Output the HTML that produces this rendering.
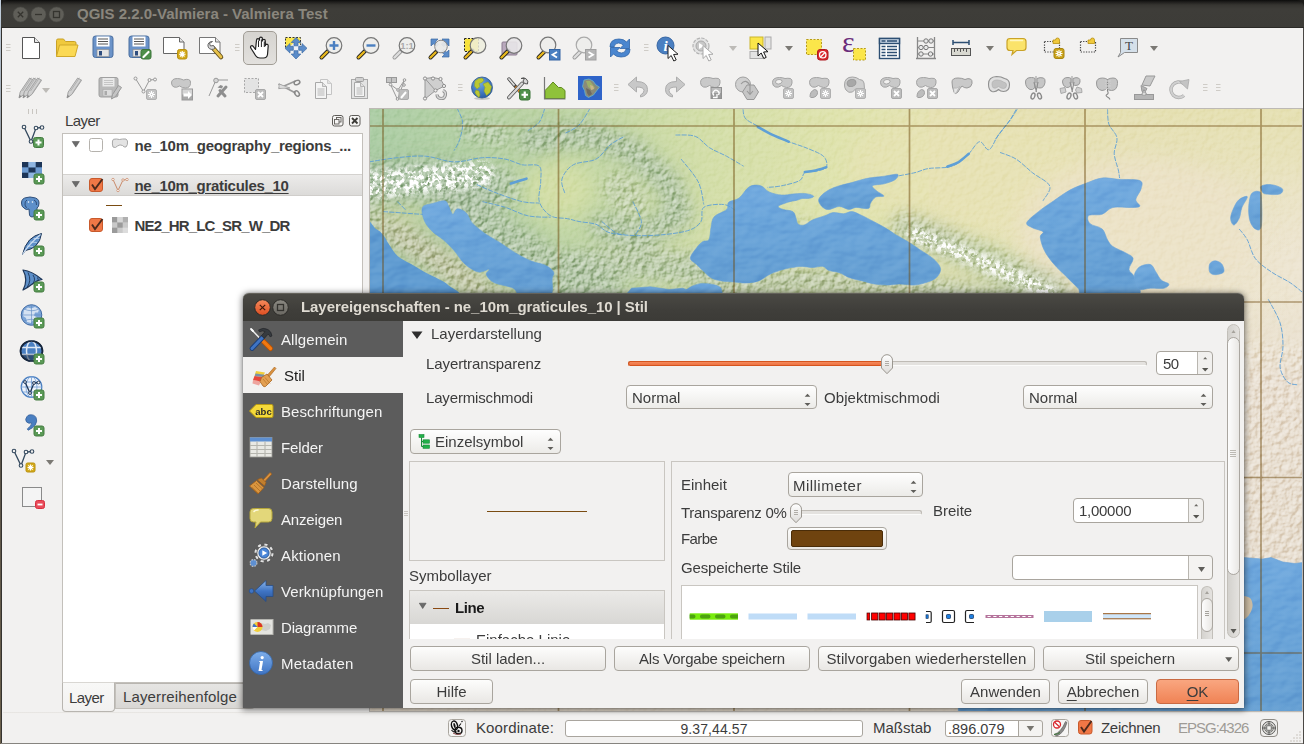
<!DOCTYPE html>
<html lang="de">
<head>
<meta charset="utf-8">
<title>QGIS 2.2.0-Valmiera - Valmiera Test</title>
<style>
*{box-sizing:border-box;margin:0;padding:0}
html,body{width:1304px;height:744px;overflow:hidden;background:#f2f1f0;font-family:"Liberation Sans",sans-serif;font-size:15px;color:#3c3c3c}
#root{position:absolute;left:0;top:0;width:1304px;height:744px;overflow:hidden;background:#f2f1f0}
.abs{position:absolute}
.t{position:absolute;white-space:nowrap;line-height:18px;height:18px}
.b{font-weight:700}
.titlebar{position:absolute;background:linear-gradient(#4a4944 0%,#3f3e3a 60%,#3c3b37 100%)}
.btn{position:absolute;height:24px;border:1px solid #a9a59e;border-radius:4px;background:linear-gradient(#fdfdfc,#e9e7e4);text-align:center;line-height:22px;white-space:nowrap;color:#3c3c3c}
.combo{position:absolute;height:24px;border:1px solid #a9a59e;border-radius:4px;background:linear-gradient(#fefefe,#ecebe8);line-height:24px;white-space:nowrap;color:#3c3c3c}
.field{position:absolute;border:1px solid #a9a59e;border-radius:4px;background:#fff;white-space:nowrap}
.ic{position:absolute;width:24px;height:24px;overflow:visible}
svg{display:block;overflow:visible}
</style>
</head>
<body>
<div id="root">
<!-- main window chrome -->
<div class="abs" style="left:0;top:0;width:2.400px;height:744px;background:#35332f"></div>
<div class="abs" style="left:0;top:0;width:1.300px;height:744px;z-index:3;background:linear-gradient(#c3d0de 0,#a3adb8 14%,#77746f 34%,#5c554a 60%,#6b604c 100%)"></div>
<div class="abs" style="left:0;top:0;width:1304px;height:8px;background:#1b1a18"></div>
<div class="abs" style="left:1px;top:0;width:1303px;height:28px;border-bottom:1px solid #2b2a27;border-radius:7px 7px 0 0;background:linear-gradient(#0c0c0b 0,#1f1e1c 2px,#363531 5px,#3e3d39 9px,#3d3c38 100%)"></div>
<!-- window buttons (inactive) -->
<svg class="abs" style="left:12px;top:6px" width="60" height="18" viewBox="0 0 60 18">
 <g fill="#5f5e58" stroke="#4a4944" stroke-width=".6"><circle cx="8.500" cy="8.500" r="7.500"/><circle cx="26.500" cy="8.500" r="7.500"/><circle cx="44.500" cy="8.500" r="7.500"/></g>
 <g stroke="#35342f" stroke-width="1.300" fill="none"><path d="M5.800 5.800l5.400 5.400M11.200 5.800l-5.400 5.400"/><path d="M23 8.500h7"/><rect x="41.500" y="5.500" width="6" height="6"/></g>
</svg>
<div class="t b" style="left:77px;top:5px;color:#8a867d">QGIS 2.2.0-Valmiera - Valmiera Test</div>

<!-- status bar -->
<div class="abs" style="left:3px;top:712px;width:1301px;height:2px;background:linear-gradient(#e2e0dc,#f7f6f5)"></div>
<div class="abs" style="left:0;top:743px;width:1304px;height:1px;background:#86847f"></div>
<div class="t" style="left:476px;top:719px;letter-spacing:.12px">Koordinate:</div>
<div class="field" style="left:565px;top:720px;width:298px;height:17px;border-radius:3px;text-align:center;line-height:17px;font-size:14px;overflow:hidden"><span style="position:relative;top:-.5px;letter-spacing:.1px">9.37,44.57</span></div>
<div class="t" style="left:873px;top:719px">Maßstab</div>
<div class="field" style="left:945px;top:720px;width:98px;height:17px;border-radius:3px;overflow:hidden;line-height:17px;background:linear-gradient(90deg,#fff 0,#fff 72px,#a9a59e 72px,#a9a59e 73px,#f4f3f1 73px)"><span style="position:relative;left:2px;top:-1.500px;font-size:14.500px">.896.079</span></div>
<svg class="abs" style="left:1025px;top:725px" width="12" height="8"><path d="M1.600 1h7.600l-3.800 5.200z" fill="#77756f"/></svg>
<div class="t" style="left:1101px;top:719px;letter-spacing:-.3px">Zeichnen</div>
<div class="t" style="left:1178px;top:719px;color:#9e9b96;letter-spacing:-.97px">EPSG:4326</div>
<!-- status bar icons -->
<svg class="abs" style="left:448px;top:719px" width="18" height="18" viewBox="0 0 18 18"><rect x=".5" y=".5" width="17" height="17" rx="3" fill="#f6f5f4" stroke="#a9a59e"/><ellipse cx="6.500" cy="6.500" rx="3" ry="4.500" fill="none" stroke="#111" stroke-width="1.400" transform="rotate(-15 6.500 6.500)"/><ellipse cx="6.500" cy="6.500" rx="1" ry="2.500" fill="#111" transform="rotate(-15 6.500 6.500)"/><ellipse cx="10.500" cy="11.500" rx="3.500" ry="3.200" fill="none" stroke="#111" stroke-width="1.400"/><circle cx="10.500" cy="12" r="1.200" fill="#111"/><path d="M3.500 11q2 3 5 1M11 7l2-2.500M13.500 3l1-1" stroke="#111" stroke-width="1.100" fill="none"/><path d="M5 14q3 2.500 8 1" stroke="#8b4a4a" stroke-width="1" fill="none"/></svg>
<svg class="abs" style="left:1051px;top:719px" width="18" height="18" viewBox="0 0 18 18"><rect x=".5" y=".5" width="17" height="17" rx="3" fill="#f6f5f4" stroke="#a9a59e"/><path d="M3 15.500q7-2 11.500-13l1.500 1q-3 10.500-10 13.500z" fill="#8a8a88" stroke="#555" stroke-width=".6"/><path d="M3 15.500q4-.5 6-2" stroke="#3e7a3a" stroke-width="1" fill="none"/><circle cx="6" cy="5.500" r="3.500" fill="#fff" stroke="#d9262c" stroke-width="1.300"/><path d="M3.600 3.300l4.800 4.400" stroke="#d9262c" stroke-width="1.300"/></svg>
<svg class="abs" style="left:1078px;top:719px" width="16" height="16" viewBox="0 0 16 16"><rect x=".5" y="1.500" width="13.500" height="13.500" rx="2.500" fill="#f07746" stroke="#c85a2c"/><path d="M3 8l3 4.500 7.500-10.500" fill="none" stroke="#4d2a1c" stroke-width="1.900"/></svg>
<svg class="abs" style="left:1260px;top:719px" width="18" height="18" viewBox="0 0 18 18"><rect x=".5" y=".5" width="17" height="17" rx="3.500" fill="#efeeec" stroke="#8e8b85"/><circle cx="9" cy="9" r="6.500" fill="#dddcd9" stroke="#5a5a58" stroke-width="1"/><circle cx="9" cy="9" r="4.300" fill="none" stroke="#6a6a68" stroke-width=".9"/><rect x="6.800" y="6.800" width="4.400" height="4.400" fill="#f4f4f2" stroke="#5a5a58" stroke-width=".8"/><path d="M9 2.500v4M9 11.500v4M2.500 9h4M11.500 9h4" stroke="#5a5a58" stroke-width="1"/></svg>
<svg class="abs" style="left:1289px;top:729px" width="14" height="14" viewBox="0 0 14 14"><g fill="#dedbd7"><rect x="10" y="2" width="2" height="2"/><rect x="7" y="5" width="2" height="2"/><rect x="10" y="5" width="2" height="2"/><rect x="4" y="8" width="2" height="2"/><rect x="7" y="8" width="2" height="2"/><rect x="10" y="8" width="2" height="2"/><rect x="1" y="11" width="2" height="2"/><rect x="4" y="11" width="2" height="2"/><rect x="7" y="11" width="2" height="2"/><rect x="10" y="11" width="2" height="2"/></g></svg>
<!-- map canvas -->
<svg class="abs" style="left:369px;top:108px;overflow:hidden" width="934" height="604" viewBox="0 0 934 604">
<defs>
<linearGradient id="land" x1="0" x2="1" y1="0" y2="0">
<stop offset="0" stop-color="#accda5"/><stop offset="0.1" stop-color="#b4d0a5"/><stop offset="0.2" stop-color="#bfd5a5"/><stop offset="0.36" stop-color="#d3dea9"/><stop offset="0.5" stop-color="#dfe3ae"/><stop offset="0.66" stop-color="#e6e3b5"/><stop offset="0.8" stop-color="#ebe3c4"/><stop offset="1" stop-color="#ede5d2"/>
</linearGradient>
<linearGradient id="south" x1="0" x2="0" y1="0" y2="1">
<stop offset="0" stop-color="#e8dfce" stop-opacity="0"/><stop offset="0.3" stop-color="#e8dfce" stop-opacity="0"/><stop offset="0.45" stop-color="#e8ded0" stop-opacity="1"/><stop offset="1" stop-color="#e4dacb" stop-opacity="1"/>
</linearGradient>
<linearGradient id="neast" x1="0" x2="0" y1="0" y2="1"><stop offset="0" stop-color="#e5e0b2" stop-opacity="1"/><stop offset="0.35" stop-color="#e6e1b6" stop-opacity=".8"/><stop offset="1" stop-color="#e9e2c0" stop-opacity="0"/></linearGradient>
<linearGradient id="sea" x1="0" x2="0" y1="0" y2="1"><stop offset="0" stop-color="#72aadf"/><stop offset="0.35" stop-color="#6ba5da"/><stop offset="1" stop-color="#649ed2"/></linearGradient>
<filter id="blur6" x="-20%" y="-20%" width="140%" height="140%"><feGaussianBlur stdDeviation="6"/></filter>
<filter id="blur10" x="-30%" y="-30%" width="160%" height="160%"><feGaussianBlur stdDeviation="10"/></filter>
<filter id="blur3" x="-20%" y="-20%" width="140%" height="140%"><feGaussianBlur stdDeviation="3"/></filter>
<filter id="relief" x="0" y="0" width="100%" height="100%" color-interpolation-filters="sRGB">
<feTurbulence type="fractalNoise" baseFrequency="0.17" numOctaves="4" seed="11" result="n"/>
<feDiffuseLighting in="n" surfaceScale="2.600" diffuseConstant="1" lighting-color="#fff"><feDistantLight azimuth="225" elevation="35"/></feDiffuseLighting>
</filter>
<filter id="relief2" x="0" y="0" width="100%" height="100%" color-interpolation-filters="sRGB">
<feTurbulence type="fractalNoise" baseFrequency="0.035 0.06" numOctaves="3" seed="5" result="n"/>
<feDiffuseLighting in="n" surfaceScale="5" diffuseConstant="1" lighting-color="#fff"><feDistantLight azimuth="225" elevation="32"/></feDiffuseLighting>
</filter>
<filter id="snow" x="0" y="0" width="100%" height="100%" color-interpolation-filters="sRGB">
<feTurbulence type="fractalNoise" baseFrequency="0.22" numOctaves="3" seed="3" result="n"/>
<feColorMatrix in="n" type="matrix" values="0 0 0 0 1  0 0 0 0 1  0 0 0 0 1  6 0 0 0 -2.700"/>
</filter>
<mask id="mtn" maskUnits="userSpaceOnUse" x="0" y="0" width="935" height="604">
<rect width="935" height="604" fill="#2c2c2c"/>
<g filter="url(#blur6)" fill="none" stroke="#fff" stroke-linecap="round" stroke-linejoin="round">
<path d="M-10 78L60 72 130 80" stroke-width="42"/>
<path d="M0 110L50 140 100 175 140 200" stroke-width="26"/>
<path d="M85 95L130 130 190 168 240 195" stroke-width="42"/>
<path d="M160 32L215 26 262 42 300 76 312 108 272 128 232 118" stroke-width="24"/>
<path d="M250 80L262 95" stroke-width="34"/>
<path d="M205 158L270 154 335 162" stroke-width="34"/>
<path d="M100 20L130 28" stroke-width="22"/>
<path d="M536 118L590 140 640 162 690 186" stroke-width="30"/>
<path d="M350 182L430 172 530 178 640 195" stroke-width="26"/>
<path d="M420 116L440 114" stroke-width="8"/>
</g>
<rect x="874" y="235" width="80" height="225" fill="#e0e0e0" filter="url(#blur6)"/>
</mask>
<mask id="mtn2" maskUnits="userSpaceOnUse" x="0" y="0" width="935" height="604">

<g filter="url(#blur6)" fill="none" stroke="#fff" stroke-linecap="round" stroke-linejoin="round">
<path d="M-10 78L60 72 130 80" stroke-width="42"/>
<path d="M0 110L50 140 100 175 140 200" stroke-width="26"/>
<path d="M85 95L130 130 190 168 240 195" stroke-width="42"/>
<path d="M160 32L215 26 262 42 300 76 312 108 272 128 232 118" stroke-width="24"/>
<path d="M250 80L262 95" stroke-width="34"/>
<path d="M205 158L270 154 335 162" stroke-width="34"/>
<path d="M100 20L130 28" stroke-width="22"/>
<path d="M536 118L590 140 640 162 690 186" stroke-width="30"/>
<path d="M350 182L430 172 530 178 640 195" stroke-width="26"/>
<path d="M420 116L440 114" stroke-width="8"/>
</g>

</mask>
<mask id="snowA" maskUnits="userSpaceOnUse" x="0" y="0" width="935" height="604">
<g filter="url(#blur3)" fill="none" stroke="#fff" stroke-linecap="round" stroke-linejoin="round">
<path d="M-10 78L30 74 70 70 112 66" stroke-width="27"/>
<path d="M545 126L590 144 640 166 680 184" stroke-width="15"/>
</g>
</mask>
</defs>

<rect width="934" height="604" fill="url(#land)"/>
<rect width="934" height="604" fill="url(#south)"/>
<rect x="560" width="374" height="150" fill="url(#neast)"/>
<g filter="url(#blur10)">
<ellipse cx="50" cy="78" rx="90" ry="26" fill="#a3bf9b" opacity=".8"/>
<path d="M85 95L130 130 190 168 240 195" stroke="#a9c39d" stroke-width="44" fill="none" opacity=".75" stroke-linecap="round"/>
<path d="M0 108L50 140 100 175 140 200" stroke="#bdc298" stroke-width="30" fill="none" opacity=".7" stroke-linecap="round"/>
<path d="M160 32L215 26 262 42 300 76 312 108 272 128 232 118" stroke="#a8c29d" stroke-width="24" fill="none" opacity=".8" stroke-linecap="round" stroke-linejoin="round"/>
<ellipse cx="190" cy="82" rx="34" ry="30" fill="#d4dea6" opacity=".95"/>
<ellipse cx="275" cy="150" rx="50" ry="12" fill="#d6dfa8" opacity=".9"/>
<ellipse cx="30" cy="105" rx="45" ry="9" fill="#c9d7a3" opacity=".9"/>
<path d="M205 160L270 156 335 164" stroke="#adc59f" stroke-width="30" fill="none" opacity=".7" stroke-linecap="round"/>
<path d="M536 120L590 142 640 164 690 188" stroke="#b0c499" stroke-width="26" fill="none" opacity=".85" stroke-linecap="round"/>
<path d="M350 184L430 174 530 180 640 196" stroke="#b8c69f" stroke-width="26" fill="none" opacity=".9" stroke-linecap="round"/>
<ellipse cx="600" cy="60" rx="120" ry="60" fill="#e7e2b4" opacity=".6"/>
<ellipse cx="770" cy="120" rx="120" ry="70" fill="#ece2c8" opacity=".8"/>
<path d="M20 122L70 150 110 180" stroke="#cdc9a0" stroke-width="16" fill="none" opacity=".9" stroke-linecap="round"/>
<ellipse cx="620" cy="150" rx="40" ry="12" fill="#c5d6a2" opacity=".8" transform="rotate(22 620 150)"/>
</g>

<rect width="934" height="604" fill="#b2bdae" mask="url(#mtn2)" opacity=".3"/>
<rect width="934" height="604" filter="url(#relief)" mask="url(#mtn)" style="mix-blend-mode:soft-light" opacity="1"/>
<rect width="934" height="200" filter="url(#snow)" mask="url(#snowA)"/>
<path d="M-3.6 117.0C-1.8 105.8 4.2 119.5 7.1 121.0C10.0 122.6 11.6 123.7 13.8 126.4C16.1 129.1 18.1 133.6 20.6 137.2C23.0 140.7 25.1 144.8 28.6 147.9C32.2 151.1 37.6 153.3 42.1 156.0C46.6 158.7 51.0 161.6 55.5 164.0C60.0 166.5 64.9 168.5 69.0 170.8C73.0 173.0 77.0 174.6 79.7 177.5C82.4 180.4 99.0 186.4 85.1 188.2C71.2 190.0 11.2 200.1 -3.6 188.2C-18.4 176.4 -5.4 128.2 -3.6 117.0Z" fill="#5f9bd1"/>
<g fill="url(#sea)" stroke="#6aa3d8" stroke-width=".6">
<path d="M53.4 99.5C54.7 96.6 59.9 96.6 63.6 95.5C67.3 94.4 73.0 92.4 75.7 92.8C78.4 93.3 78.4 95.9 79.7 98.2C81.1 100.4 82.3 105.8 83.7 106.2C85.2 106.7 86.1 101.1 88.3 100.9C90.6 100.6 94.6 102.4 97.2 104.9C99.8 107.4 100.5 112.1 103.9 115.7C107.3 119.2 112.9 123.3 117.3 126.4C121.8 129.5 125.9 131.3 130.8 134.5C135.7 137.6 141.5 142.1 146.9 145.2C152.3 148.4 158.1 151.3 163.0 153.3C168.0 155.3 172.9 155.5 176.5 157.3C180.1 159.1 183.4 161.8 184.5 164.0C185.7 166.3 183.9 166.7 183.2 170.8C182.5 174.8 185.7 185.3 180.5 188.2C175.4 191.1 158.3 189.6 152.3 188.2C146.2 186.9 148.7 182.4 144.2 180.2C139.7 177.9 129.9 177.0 125.4 174.8C120.9 172.6 118.2 169.0 117.3 166.7C116.4 164.5 121.4 161.8 120.0 161.4C118.7 160.9 113.3 164.9 109.3 164.0C105.2 163.1 99.9 159.6 95.8 156.0C91.8 152.4 88.7 146.6 85.1 142.5C81.5 138.5 77.9 134.9 74.3 131.8C70.7 128.6 66.7 126.9 63.6 123.7C60.4 120.6 57.2 117.0 55.5 113.0C53.8 108.9 52.0 102.4 53.4 99.5Z"/>
<path d="M321.4 150.2C321.4 147.4 325.5 142.6 327.6 139.8C329.6 137.1 331.7 135.0 333.8 133.6C335.8 132.2 338.6 133.9 340.0 131.5C341.4 129.1 341.2 122.9 342.1 119.1C342.9 115.3 342.6 111.7 345.2 108.8C347.7 105.8 355.2 103.9 357.6 101.5C360.0 99.1 357.6 96.2 359.7 94.3C361.7 92.4 366.6 92.7 370.0 90.1C373.5 87.5 376.7 80.8 380.4 78.7C384.0 76.7 388.5 76.8 391.7 77.7C395.0 78.6 396.6 82.4 400.0 83.9C403.5 85.5 408.5 86.7 412.4 87.0C416.4 87.4 420.4 86.3 423.8 86.0C427.3 85.7 430.3 85.3 433.2 85.4C436.0 85.4 439.1 85.9 441.0 86.4C443.0 86.9 444.9 87.8 444.7 88.5C444.6 89.1 442.3 90.0 440.4 90.3C438.5 90.7 435.2 90.2 433.2 90.5C431.1 90.9 430.4 91.6 428.0 92.2C425.6 92.8 421.8 93.2 418.7 94.3C415.6 95.3 410.0 97.2 409.3 98.4C408.7 99.6 412.1 100.7 414.5 101.5C416.9 102.4 421.8 102.2 423.8 103.6C425.9 105.0 426.1 107.7 426.9 109.8C427.8 111.9 427.6 114.8 429.0 116.0C430.4 117.2 432.8 117.7 435.2 117.0C437.6 116.4 440.1 113.4 443.5 111.9C447.0 110.3 452.5 108.9 455.9 107.7C459.4 106.5 461.1 105.0 464.2 104.6C467.3 104.3 471.5 105.8 474.6 105.7C477.7 105.5 480.1 103.4 482.8 103.6C485.6 103.8 488.0 105.3 491.1 106.7C494.2 108.1 497.5 109.8 501.5 111.9C505.4 113.9 510.8 116.7 514.9 119.1C519.1 121.5 522.4 123.9 526.3 126.4C530.3 128.8 534.6 131.0 538.7 133.6C542.9 136.2 547.0 139.1 551.2 141.9C555.3 144.6 560.3 147.4 563.6 150.2C566.9 152.9 569.6 156.0 570.8 158.4C572.0 160.9 571.7 162.6 570.8 164.7C570.0 166.7 568.2 169.1 565.7 170.9C563.1 172.6 558.8 174.0 555.3 175.0C551.9 176.0 549.1 176.9 545.0 177.1C540.8 177.3 534.9 176.0 530.5 176.0C526.0 176.0 522.2 177.1 518.0 177.1C513.9 177.1 509.8 176.7 505.6 176.0C501.5 175.4 497.3 174.0 493.2 172.9C489.1 171.9 484.6 171.2 480.8 169.8C477.0 168.5 473.9 165.9 470.4 164.7C467.0 163.5 462.8 163.6 460.1 162.6C457.3 161.6 456.6 159.0 453.9 158.4C451.1 157.9 447.0 159.5 443.5 159.5C440.1 159.5 436.6 158.4 433.2 158.4C429.7 158.4 426.6 158.8 422.8 159.5C419.0 160.2 414.2 161.4 410.4 162.6C406.6 163.8 403.5 165.0 400.0 166.7C396.6 168.5 393.5 171.6 389.7 172.9C385.9 174.3 381.4 174.8 377.3 175.0C373.1 175.2 369.0 174.3 364.8 174.0C360.7 173.6 356.2 173.6 352.4 172.9C348.6 172.3 345.2 171.6 342.1 169.8C339.0 168.1 336.2 164.8 333.8 162.6C331.4 160.3 329.6 158.4 327.6 156.4C325.5 154.3 321.4 152.9 321.4 150.2Z"/>
<path d="M311.0 189.5C305.5 188.5 313.1 185.6 315.1 183.7C317.2 181.8 320.3 179.5 323.4 178.1C326.5 176.7 330.0 175.6 333.8 175.4C337.6 175.3 343.1 176.1 346.2 177.1C349.3 178.0 352.1 179.2 352.4 181.2C352.8 183.3 355.2 188.1 348.3 189.5C341.4 190.9 316.5 190.5 311.0 189.5Z"/>
<path d="M453.9 99.4C452.1 98.1 450.1 95.1 449.7 93.2C449.4 91.3 450.1 90.0 451.8 88.1C453.5 86.2 457.0 83.6 460.1 81.8C463.2 80.1 466.6 78.9 470.4 77.7C474.2 76.5 478.4 75.8 482.8 74.6C487.3 73.4 492.2 71.5 497.3 70.5C502.5 69.4 508.7 69.1 513.9 68.4C519.1 67.7 526.3 65.8 528.4 66.3C530.5 66.8 528.4 69.9 526.3 71.5C524.3 73.0 519.8 74.6 516.0 75.6C512.2 76.7 504.9 76.5 503.5 77.7C502.2 78.9 505.8 81.2 507.7 82.9C509.6 84.6 515.1 87.0 514.9 88.1C514.8 89.1 508.9 87.9 506.7 89.1C504.4 90.3 502.7 93.4 501.5 95.3C500.3 97.2 501.8 99.8 499.4 100.5C497.0 101.2 490.3 99.3 487.0 99.4C483.7 99.6 482.5 101.7 479.7 101.5C477.0 101.3 473.7 98.4 470.4 98.4C467.1 98.4 462.8 101.3 460.1 101.5C457.3 101.7 455.6 100.8 453.9 99.4Z"/>
<path d="M657.9 114.3C659.2 111.4 666.8 105.8 671.3 102.2C675.8 98.6 679.8 96.2 684.8 92.8C689.7 89.4 695.5 85.0 700.9 82.1C706.3 79.1 711.6 77.3 717.0 75.3C722.4 73.3 727.8 70.6 733.2 70.0C738.5 69.3 743.0 70.9 749.3 71.3C755.6 71.7 767.0 71.1 770.8 72.6C774.6 74.2 772.8 77.6 772.1 80.7C771.5 83.8 767.0 88.6 766.8 91.5C766.5 94.4 771.5 96.8 770.8 98.2C770.1 99.5 767.2 99.3 762.7 99.5C758.2 99.8 748.8 98.4 743.9 99.5C739.0 100.6 737.2 104.9 733.2 106.2C729.1 107.6 721.7 106.0 719.7 107.6C717.7 109.2 718.8 113.4 721.1 115.7C723.3 117.9 730.2 118.3 733.2 121.0C736.1 123.7 736.7 128.9 738.5 131.8C740.3 134.7 740.8 136.3 743.9 138.5C747.0 140.7 754.0 143.2 757.3 145.2C760.7 147.2 763.6 147.9 764.1 150.6C764.5 153.3 759.8 158.2 760.0 161.4C760.3 164.5 764.1 164.9 765.4 169.4C766.8 173.9 776.2 185.1 768.1 188.2C760.0 191.4 726.9 189.6 717.0 188.2C707.2 186.9 712.1 183.3 709.0 180.2C705.8 177.0 702.2 173.5 698.2 169.4C694.2 165.4 688.6 160.5 684.8 156.0C681.0 151.5 677.6 147.0 675.4 142.5C673.1 138.1 671.5 132.2 671.3 129.1C671.1 126.0 675.4 125.3 674.0 123.7C672.7 122.2 665.9 121.3 663.3 119.7C660.6 118.1 656.5 117.2 657.9 114.3Z"/>
<path d="M765.4 166.7C766.1 164.0 768.1 160.4 770.8 158.7C773.5 157.0 778.8 155.6 781.5 156.5C784.2 157.4 785.1 161.4 786.9 164.0C788.7 166.6 790.1 170.1 792.3 172.1C794.4 174.1 799.4 174.8 799.8 176.1C800.3 177.5 798.0 179.5 795.0 180.2C791.9 180.8 785.6 179.9 781.5 180.2C777.5 180.4 773.2 182.4 770.8 181.5C768.3 180.6 767.6 177.3 766.8 174.8C765.9 172.3 764.7 169.4 765.4 166.7Z"/>
<path d="M861.6 110.3C861.6 107.4 863.4 102.7 864.9 99.5C866.3 96.4 868.0 93.3 870.2 91.5C872.5 89.7 877.9 87.4 878.3 88.8C878.8 90.1 874.3 95.9 872.9 99.5C871.6 103.1 871.6 107.4 870.2 110.3C868.9 113.2 866.3 117.0 864.9 117.0C863.4 117.0 861.6 113.2 861.6 110.3Z"/>
<path d="M882.3 86.1C883.9 83.4 887.4 82.9 889.1 83.4C890.7 83.8 891.8 82.9 892.3 88.8C892.8 94.6 893.3 113.0 892.3 118.3C891.3 123.7 888.3 121.9 886.4 121.0C884.5 120.1 882.1 116.6 881.0 113.0C879.9 109.4 879.4 104.0 879.7 99.5C879.9 95.0 880.8 88.8 882.3 86.1Z"/>
<path d="M892.3 78.0C893.9 76.9 899.0 76.2 902.5 76.7C906.0 77.1 911.9 79.1 913.3 80.7C914.6 82.3 913.3 85.2 910.6 86.1C907.9 87.0 900.0 86.5 897.1 86.1C894.2 85.6 893.9 84.7 893.1 83.4C892.3 82.1 890.7 79.1 892.3 78.0Z"/>
<path d="M840.7 156.0C841.6 154.1 844.0 152.8 846.1 152.8C848.1 152.8 851.3 154.1 852.8 156.0C854.2 157.9 855.8 162.3 854.7 164.0C853.5 165.8 848.4 166.7 846.1 166.7C843.7 166.7 841.6 165.8 840.7 164.0C839.8 162.3 839.8 157.9 840.7 156.0Z"/>
<path d="M255.8 188.2 L262.5 180.2 L281.3 178.8 L300.1 181.5 L313.6 180.2 L323.0 183.4 L323.0 188.2Z"/>
<path d="M589.3 436.3 L707.4 442.2 L796.0 448.1 L874.8 449.6 L893.4 451.0 L902.2 449.6 L914.0 454.0 L925.8 455.5 L937.7 454.0 L937.7 607.5 L589.3 607.5Z"/>
</g>
<clipPath id="seaclip">
<path d="M-3.6 117.0C-1.8 105.8 4.2 119.5 7.1 121.0C10.0 122.6 11.6 123.7 13.8 126.4C16.1 129.1 18.1 133.6 20.6 137.2C23.0 140.7 25.1 144.8 28.6 147.9C32.2 151.1 37.6 153.3 42.1 156.0C46.6 158.7 51.0 161.6 55.5 164.0C60.0 166.5 64.9 168.5 69.0 170.8C73.0 173.0 77.0 174.6 79.7 177.5C82.4 180.4 99.0 186.4 85.1 188.2C71.2 190.0 11.2 200.1 -3.6 188.2C-18.4 176.4 -5.4 128.2 -3.6 117.0Z"/>
<path d="M53.4 99.5C54.7 96.6 59.9 96.6 63.6 95.5C67.3 94.4 73.0 92.4 75.7 92.8C78.4 93.3 78.4 95.9 79.7 98.2C81.1 100.4 82.3 105.8 83.7 106.2C85.2 106.7 86.1 101.1 88.3 100.9C90.6 100.6 94.6 102.4 97.2 104.9C99.8 107.4 100.5 112.1 103.9 115.7C107.3 119.2 112.9 123.3 117.3 126.4C121.8 129.5 125.9 131.3 130.8 134.5C135.7 137.6 141.5 142.1 146.9 145.2C152.3 148.4 158.1 151.3 163.0 153.3C168.0 155.3 172.9 155.5 176.5 157.3C180.1 159.1 183.4 161.8 184.5 164.0C185.7 166.3 183.9 166.7 183.2 170.8C182.5 174.8 185.7 185.3 180.5 188.2C175.4 191.1 158.3 189.6 152.3 188.2C146.2 186.9 148.7 182.4 144.2 180.2C139.7 177.9 129.9 177.0 125.4 174.8C120.9 172.6 118.2 169.0 117.3 166.7C116.4 164.5 121.4 161.8 120.0 161.4C118.7 160.9 113.3 164.9 109.3 164.0C105.2 163.1 99.9 159.6 95.8 156.0C91.8 152.4 88.7 146.6 85.1 142.5C81.5 138.5 77.9 134.9 74.3 131.8C70.7 128.6 66.7 126.9 63.6 123.7C60.4 120.6 57.2 117.0 55.5 113.0C53.8 108.9 52.0 102.4 53.4 99.5Z"/>
<path d="M321.4 150.2C321.4 147.4 325.5 142.6 327.6 139.8C329.6 137.1 331.7 135.0 333.8 133.6C335.8 132.2 338.6 133.9 340.0 131.5C341.4 129.1 341.2 122.9 342.1 119.1C342.9 115.3 342.6 111.7 345.2 108.8C347.7 105.8 355.2 103.9 357.6 101.5C360.0 99.1 357.6 96.2 359.7 94.3C361.7 92.4 366.6 92.7 370.0 90.1C373.5 87.5 376.7 80.8 380.4 78.7C384.0 76.7 388.5 76.8 391.7 77.7C395.0 78.6 396.6 82.4 400.0 83.9C403.5 85.5 408.5 86.7 412.4 87.0C416.4 87.4 420.4 86.3 423.8 86.0C427.3 85.7 430.3 85.3 433.2 85.4C436.0 85.4 439.1 85.9 441.0 86.4C443.0 86.9 444.9 87.8 444.7 88.5C444.6 89.1 442.3 90.0 440.4 90.3C438.5 90.7 435.2 90.2 433.2 90.5C431.1 90.9 430.4 91.6 428.0 92.2C425.6 92.8 421.8 93.2 418.7 94.3C415.6 95.3 410.0 97.2 409.3 98.4C408.7 99.6 412.1 100.7 414.5 101.5C416.9 102.4 421.8 102.2 423.8 103.6C425.9 105.0 426.1 107.7 426.9 109.8C427.8 111.9 427.6 114.8 429.0 116.0C430.4 117.2 432.8 117.7 435.2 117.0C437.6 116.4 440.1 113.4 443.5 111.9C447.0 110.3 452.5 108.9 455.9 107.7C459.4 106.5 461.1 105.0 464.2 104.6C467.3 104.3 471.5 105.8 474.6 105.7C477.7 105.5 480.1 103.4 482.8 103.6C485.6 103.8 488.0 105.3 491.1 106.7C494.2 108.1 497.5 109.8 501.5 111.9C505.4 113.9 510.8 116.7 514.9 119.1C519.1 121.5 522.4 123.9 526.3 126.4C530.3 128.8 534.6 131.0 538.7 133.6C542.9 136.2 547.0 139.1 551.2 141.9C555.3 144.6 560.3 147.4 563.6 150.2C566.9 152.9 569.6 156.0 570.8 158.4C572.0 160.9 571.7 162.6 570.8 164.7C570.0 166.7 568.2 169.1 565.7 170.9C563.1 172.6 558.8 174.0 555.3 175.0C551.9 176.0 549.1 176.9 545.0 177.1C540.8 177.3 534.9 176.0 530.5 176.0C526.0 176.0 522.2 177.1 518.0 177.1C513.9 177.1 509.8 176.7 505.6 176.0C501.5 175.4 497.3 174.0 493.2 172.9C489.1 171.9 484.6 171.2 480.8 169.8C477.0 168.5 473.9 165.9 470.4 164.7C467.0 163.5 462.8 163.6 460.1 162.6C457.3 161.6 456.6 159.0 453.9 158.4C451.1 157.9 447.0 159.5 443.5 159.5C440.1 159.5 436.6 158.4 433.2 158.4C429.7 158.4 426.6 158.8 422.8 159.5C419.0 160.2 414.2 161.4 410.4 162.6C406.6 163.8 403.5 165.0 400.0 166.7C396.6 168.5 393.5 171.6 389.7 172.9C385.9 174.3 381.4 174.8 377.3 175.0C373.1 175.2 369.0 174.3 364.8 174.0C360.7 173.6 356.2 173.6 352.4 172.9C348.6 172.3 345.2 171.6 342.1 169.8C339.0 168.1 336.2 164.8 333.8 162.6C331.4 160.3 329.6 158.4 327.6 156.4C325.5 154.3 321.4 152.9 321.4 150.2Z"/>
<path d="M311.0 189.5C305.5 188.5 313.1 185.6 315.1 183.7C317.2 181.8 320.3 179.5 323.4 178.1C326.5 176.7 330.0 175.6 333.8 175.4C337.6 175.3 343.1 176.1 346.2 177.1C349.3 178.0 352.1 179.2 352.4 181.2C352.8 183.3 355.2 188.1 348.3 189.5C341.4 190.9 316.5 190.5 311.0 189.5Z"/>
<path d="M453.9 99.4C452.1 98.1 450.1 95.1 449.7 93.2C449.4 91.3 450.1 90.0 451.8 88.1C453.5 86.2 457.0 83.6 460.1 81.8C463.2 80.1 466.6 78.9 470.4 77.7C474.2 76.5 478.4 75.8 482.8 74.6C487.3 73.4 492.2 71.5 497.3 70.5C502.5 69.4 508.7 69.1 513.9 68.4C519.1 67.7 526.3 65.8 528.4 66.3C530.5 66.8 528.4 69.9 526.3 71.5C524.3 73.0 519.8 74.6 516.0 75.6C512.2 76.7 504.9 76.5 503.5 77.7C502.2 78.9 505.8 81.2 507.7 82.9C509.6 84.6 515.1 87.0 514.9 88.1C514.8 89.1 508.9 87.9 506.7 89.1C504.4 90.3 502.7 93.4 501.5 95.3C500.3 97.2 501.8 99.8 499.4 100.5C497.0 101.2 490.3 99.3 487.0 99.4C483.7 99.6 482.5 101.7 479.7 101.5C477.0 101.3 473.7 98.4 470.4 98.4C467.1 98.4 462.8 101.3 460.1 101.5C457.3 101.7 455.6 100.8 453.9 99.4Z"/>
<path d="M657.9 114.3C659.2 111.4 666.8 105.8 671.3 102.2C675.8 98.6 679.8 96.2 684.8 92.8C689.7 89.4 695.5 85.0 700.9 82.1C706.3 79.1 711.6 77.3 717.0 75.3C722.4 73.3 727.8 70.6 733.2 70.0C738.5 69.3 743.0 70.9 749.3 71.3C755.6 71.7 767.0 71.1 770.8 72.6C774.6 74.2 772.8 77.6 772.1 80.7C771.5 83.8 767.0 88.6 766.8 91.5C766.5 94.4 771.5 96.8 770.8 98.2C770.1 99.5 767.2 99.3 762.7 99.5C758.2 99.8 748.8 98.4 743.9 99.5C739.0 100.6 737.2 104.9 733.2 106.2C729.1 107.6 721.7 106.0 719.7 107.6C717.7 109.2 718.8 113.4 721.1 115.7C723.3 117.9 730.2 118.3 733.2 121.0C736.1 123.7 736.7 128.9 738.5 131.8C740.3 134.7 740.8 136.3 743.9 138.5C747.0 140.7 754.0 143.2 757.3 145.2C760.7 147.2 763.6 147.9 764.1 150.6C764.5 153.3 759.8 158.2 760.0 161.4C760.3 164.5 764.1 164.9 765.4 169.4C766.8 173.9 776.2 185.1 768.1 188.2C760.0 191.4 726.9 189.6 717.0 188.2C707.2 186.9 712.1 183.3 709.0 180.2C705.8 177.0 702.2 173.5 698.2 169.4C694.2 165.4 688.6 160.5 684.8 156.0C681.0 151.5 677.6 147.0 675.4 142.5C673.1 138.1 671.5 132.2 671.3 129.1C671.1 126.0 675.4 125.3 674.0 123.7C672.7 122.2 665.9 121.3 663.3 119.7C660.6 118.1 656.5 117.2 657.9 114.3Z"/>
<path d="M765.4 166.7C766.1 164.0 768.1 160.4 770.8 158.7C773.5 157.0 778.8 155.6 781.5 156.5C784.2 157.4 785.1 161.4 786.9 164.0C788.7 166.6 790.1 170.1 792.3 172.1C794.4 174.1 799.4 174.8 799.8 176.1C800.3 177.5 798.0 179.5 795.0 180.2C791.9 180.8 785.6 179.9 781.5 180.2C777.5 180.4 773.2 182.4 770.8 181.5C768.3 180.6 767.6 177.3 766.8 174.8C765.9 172.3 764.7 169.4 765.4 166.7Z"/>
<path d="M861.6 110.3C861.6 107.4 863.4 102.7 864.9 99.5C866.3 96.4 868.0 93.3 870.2 91.5C872.5 89.7 877.9 87.4 878.3 88.8C878.8 90.1 874.3 95.9 872.9 99.5C871.6 103.1 871.6 107.4 870.2 110.3C868.9 113.2 866.3 117.0 864.9 117.0C863.4 117.0 861.6 113.2 861.6 110.3Z"/>
<path d="M882.3 86.1C883.9 83.4 887.4 82.9 889.1 83.4C890.7 83.8 891.8 82.9 892.3 88.8C892.8 94.6 893.3 113.0 892.3 118.3C891.3 123.7 888.3 121.9 886.4 121.0C884.5 120.1 882.1 116.6 881.0 113.0C879.9 109.4 879.4 104.0 879.7 99.5C879.9 95.0 880.8 88.8 882.3 86.1Z"/>
<path d="M892.3 78.0C893.9 76.9 899.0 76.2 902.5 76.7C906.0 77.1 911.9 79.1 913.3 80.7C914.6 82.3 913.3 85.2 910.6 86.1C907.9 87.0 900.0 86.5 897.1 86.1C894.2 85.6 893.9 84.7 893.1 83.4C892.3 82.1 890.7 79.1 892.3 78.0Z"/>
<path d="M840.7 156.0C841.6 154.1 844.0 152.8 846.1 152.8C848.1 152.8 851.3 154.1 852.8 156.0C854.2 157.9 855.8 162.3 854.7 164.0C853.5 165.8 848.4 166.7 846.1 166.7C843.7 166.7 841.6 165.8 840.7 164.0C839.8 162.3 839.8 157.9 840.7 156.0Z"/>
<path d="M255.8 188.2 L262.5 180.2 L281.3 178.8 L300.1 181.5 L313.6 180.2 L323.0 183.4 L323.0 188.2Z"/>
<path d="M589.3 436.3 L707.4 442.2 L796.0 448.1 L874.8 449.6 L893.4 451.0 L902.2 449.6 L914.0 454.0 L925.8 455.5 L937.7 454.0 L937.7 607.5 L589.3 607.5Z"/>
</clipPath>
<rect width="934" height="604" filter="url(#relief2)" clip-path="url(#seaclip)" style="mix-blend-mode:soft-light" opacity=".18"/>
<path d="M866.8 486.5C868.1 482.3 872.4 487.4 874.8 487.9C877.1 488.5 879.5 488.5 881.0 490.0C882.5 491.5 883.5 494.4 883.6 496.8C883.7 499.2 882.7 502.0 881.6 504.2C880.5 506.4 878.9 508.6 877.1 510.1C875.4 511.6 873.0 512.5 871.2 513.0C869.5 513.5 867.5 517.5 866.8 513.0C866.1 508.6 865.5 490.6 866.8 486.5Z" fill="#cbbca3"/>
<g fill="none" stroke="#5e9fd6" stroke-width="0.9" stroke-linejoin="round" stroke-dasharray="5 1.200">
<path d="M374.0 1.4C374.5 3.0 374.0 7.9 376.7 10.8C379.4 13.7 386.1 16.4 390.1 18.9C394.2 21.3 396.0 23.1 400.9 25.6C405.8 28.1 413.4 31.2 419.7 33.7C426.0 36.1 432.7 37.9 438.5 40.4C444.4 42.9 451.5 45.3 454.7 48.5C457.8 51.6 458.7 56.7 457.3 59.2C456.0 61.7 450.2 62.3 446.6 63.2C443.0 64.1 438.5 63.0 435.8 64.6C433.2 66.1 434.5 70.4 430.5 72.6C426.4 74.9 417.0 76.9 411.6 78.0C406.3 79.1 400.4 79.1 398.2 79.4"/>
<path d="M648.2 1.4C646.9 3.4 643.3 9.2 640.1 13.5C637.0 17.8 632.7 22.2 629.4 26.9C626.0 31.7 623.1 40.6 620.0 41.7C616.8 42.9 613.9 33.0 610.6 33.7C607.2 34.3 603.4 42.2 599.8 45.8C596.2 49.3 592.6 52.9 589.1 55.2C585.5 57.4 583.2 58.3 578.3 59.2C573.4 60.1 564.9 59.7 559.5 60.5C554.1 61.4 551.0 63.4 546.1 64.6C541.1 65.8 532.6 67.3 529.9 67.8"/>
<path d="M738.5 1.4C738.8 3.9 738.3 11.5 739.9 16.2C741.4 20.9 747.0 24.7 747.9 29.6C748.8 34.6 745.0 40.4 745.2 45.8C745.5 51.1 748.4 57.9 749.3 61.9C750.2 65.9 750.4 68.6 750.6 70.0"/>
<path d="M631.0 44.4C633.7 45.5 641.8 47.8 647.1 51.1C652.5 54.5 657.7 60.1 663.3 64.6C668.9 69.1 678.9 73.3 680.7 78.0C682.5 82.7 675.1 90.3 674.0 92.8"/>
<path d="M647.1 1.4C646.2 3.0 644.0 7.5 641.8 10.8C639.5 14.2 636.4 18.0 633.7 21.6C631.0 25.2 627.0 30.5 625.6 32.3"/>
<path d="M0.0 53.9C4.7 53.2 18.9 50.6 28.4 49.7C37.8 48.7 47.3 47.5 56.8 48.2C66.2 49.0 75.7 53.7 85.1 53.9C94.6 54.2 105.0 50.1 113.5 49.7C122.0 49.2 129.6 49.9 136.2 51.1C142.8 52.3 147.6 55.6 153.2 56.8C158.9 57.9 167.2 55.3 170.3 58.2C173.3 61.0 171.7 67.9 171.7 73.8C171.7 79.7 168.6 88.0 170.3 93.6C171.9 99.3 176.9 105.0 181.6 107.8C186.3 110.7 193.9 109.7 198.6 110.7C203.4 111.6 205.3 112.6 210.0 113.5C214.7 114.5 221.8 114.5 227.0 116.3C232.2 118.2 234.1 123.0 241.2 124.9C248.3 126.7 260.1 127.5 269.6 127.7C279.0 127.9 289.4 127.2 298.0 126.3C306.5 125.3 315.0 124.1 320.7 122.0C326.3 119.9 329.6 117.3 332.0 113.5C334.4 109.7 331.1 102.2 334.8 99.3C338.6 96.5 349.5 96.0 354.7 96.5C359.9 97.0 364.2 101.2 366.1 102.2"/>
<path d="M195.8 85.1C195.3 82.8 191.5 75.7 193.0 70.9C194.4 66.2 198.6 60.1 204.3 56.8C210.0 53.4 220.9 54.4 227.0 51.1C233.2 47.8 236.5 40.7 241.2 36.9C245.9 33.1 253.0 29.8 255.4 28.4"/>
<path d="M113.5 93.6C117.3 94.6 128.6 97.0 136.2 99.3C143.8 101.7 151.3 106.2 158.9 107.8C166.5 109.5 177.8 109.0 181.6 109.3"/>
<path d="M107.8 76.6C111.1 78.0 120.1 82.3 127.7 85.1C135.3 88.0 146.1 92.0 153.2 93.6C160.3 95.3 167.4 94.8 170.3 95.1"/>
<path d="M306.5 27.0C309.8 27.2 320.7 26.2 326.3 28.4C332.0 30.5 335.3 36.4 340.5 39.7C345.7 43.0 351.9 45.2 357.5 48.2C363.2 51.3 371.7 56.5 374.6 58.2"/>
<path d="M312.1 51.1C315.0 54.9 325.4 66.2 329.2 73.8C333.0 81.3 333.9 92.7 334.8 96.5"/>
<path d="M88.0 0.0C88.9 2.4 93.2 9.0 93.6 14.2C94.1 19.4 92.2 26.5 90.8 31.2C89.4 35.9 86.1 40.7 85.1 42.6"/>
<path d="M175.9 0.0C175.0 2.4 173.1 10.4 170.3 14.2C167.4 18.0 160.8 21.3 158.9 22.7"/>
<path d="M221.3 0.0C219.4 2.8 214.2 12.8 210.0 17.0C205.7 21.3 198.2 24.1 195.8 25.5"/>
<path d="M14.2 103.6C17.5 103.8 27.4 104.5 34.1 105.0C40.7 105.5 50.6 106.2 53.9 106.4"/>
<path d="M263.9 93.6C265.3 97.0 271.9 108.1 272.4 113.5C272.9 118.9 267.7 124.1 266.7 126.3"/>
<path d="M232.7 113.5C235.1 115.4 243.1 122.7 246.9 124.9C250.7 127.0 254.0 126.0 255.4 126.3"/>
<path d="M28.4 93.6C29.8 95.1 35.5 100.7 36.9 102.2"/>
<path d="M899.3 191.3C901.2 195.2 908.6 207.0 911.1 214.9C913.5 222.8 914.0 231.1 914.0 238.5C914.0 245.9 910.4 253.3 911.1 259.2C911.8 265.1 915.5 271.0 918.5 273.9C921.4 276.9 927.1 276.4 928.8 276.9"/>
<path d="M870.2 121.0C871.6 122.8 875.6 126.9 878.3 131.8C881.0 136.7 882.3 145.2 886.4 150.6C890.4 156.0 896.7 160.0 902.5 164.0C908.3 168.1 915.9 171.2 921.3 174.8C926.7 178.4 932.7 183.8 935.0 185.5"/>
</g>
<g fill="none" stroke="#5e9fd6" stroke-width="2.600" stroke-linecap="round">
<path d="M141.9 75.5C144.5 74.7 154.9 71.5 157.5 70.7"/>
<path d="M388.8 18.9C390.8 20.0 395.7 23.1 400.9 25.6C406.0 28.1 416.6 32.3 419.7 33.7"/>
<path d="M578.3 58.7C580.1 57.9 585.5 56.5 589.1 54.4C592.6 52.2 598.0 47.2 599.8 45.8"/>
<path d="M435.8 64.0C437.6 63.8 443.0 63.2 446.6 62.4C450.2 61.6 455.6 59.7 457.3 59.2"/>
</g>
<path d="M14.0 0V604M189.5 0V604M365.0 0V604M540.5 0V604M716.0 0V604M892.0 0V604M0 18.0H934M0 194.0H934M0 369.5H934M0 545.0H934" stroke="#6e4a0e" stroke-opacity="0.5" stroke-width="1.700" fill="none"/>
<rect x="0.5" y="0.5" width="933" height="603" fill="none" stroke="#bdb9b4"/>
</svg>
<!-- toolbars -->
<div class="abs" style="left:243px;top:31px;width:34px;height:34px;border:1px solid #a19d96;border-radius:5px;background:linear-gradient(#d6d4d0,#e2e0dd)"></div>
<svg class="ic" style="left:-4px;top:36px" viewBox="0 0 24 24"><path d="M10 8.500h4.500M10 11.500h4.500M10 14.500h4.500" stroke="#cfccc7" stroke-width="1"/></svg>
<svg class="ic" style="left:19px;top:36px" viewBox="0 0 24 24"><path d="M3.500 1.500h12l5 5v16h-17z" fill="#fff" stroke="#555" stroke-width="1"/><path d="M15.500 1.500v5h5" fill="#e8e8e8" stroke="#555" stroke-width="1"/></svg>
<svg class="ic" style="left:54.5px;top:36px" viewBox="0 0 24 24"><path d="M1.500 20.500v-16q0-1.500 1.500-1.500h5.500l2 2.500h9q1.500 0 1.500 1.500v3" fill="#f0c93d" stroke="#c9a227" stroke-width="1"/><path d="M1.500 20.500l3-11.500h18.500l-3 11.500z" fill="#fbd954" stroke="#d1a92a" stroke-width="1"/></svg>
<svg class="ic" style="left:91px;top:35px" viewBox="0 0 24 24"><rect x="2" y="1" width="20" height="21.500" rx="2.500" fill="#6b93c9" stroke="#4b6f9f"/><rect x="5.500" y="1.500" width="13" height="10" fill="#fff"/><path d="M7 4h10M7 6.500h10M7 9h10" stroke="#555" stroke-width="1"/><rect x="6" y="14.500" width="12" height="7" fill="#e4e4e4" stroke="#8a8a8a" stroke-width=".6"/><rect x="8" y="16" width="3" height="4.500" fill="#2e4d7e"/></svg>
<svg class="ic" style="left:127px;top:35px" viewBox="0 0 24 24"><rect x="2" y="1" width="20" height="21.500" rx="2.500" fill="#6b93c9" stroke="#4b6f9f"/><rect x="5.500" y="1.500" width="13" height="10" fill="#fff"/><path d="M7 4h10M7 6.500h10M7 9h10" stroke="#555" stroke-width="1"/><rect x="6" y="14.500" width="12" height="7" fill="#e4e4e4" stroke="#8a8a8a" stroke-width=".6"/><rect x="8" y="16" width="3" height="4.500" fill="#2e4d7e"/><rect x="14" y="14.500" width="10" height="9.500" rx="2" fill="#4e8f4a" stroke="#3b7538"/><path d="M16.500 22l5-5" stroke="#fff" stroke-width="2.200" stroke-linecap="round"/></svg>
<svg class="ic" style="left:163px;top:35px" viewBox="0 0 24 24"><path d="M0.500 2.500h16l4.500 4.500v11.500h-20.500z" fill="#fff" stroke="#666" stroke-width="1"/><path d="M16.500 2.500v4.500h4.500" fill="#e5e5e5" stroke="#666"/><rect x="14.500" y="14.500" width="9.500" height="9.500" rx="2" fill="#d4aa1a" stroke="#b8900f"/><path d="M19.250 16v6.500M16 19.250h6.500M17 17l4.500 4.500M21.500 17l-4.500 4.500" stroke="#fff" stroke-width="1.200"/></svg>
<svg class="ic" style="left:199px;top:35px" viewBox="0 0 24 24"><path d="M0.500 2.500h16l4.500 4.500v11.500h-20.500z" fill="#fff" stroke="#777" stroke-width="1"/><path d="M16.500 2.500v4.500h4.500" fill="#e5e5e5" stroke="#777"/><path d="M14 13l8 9" stroke="#5c4a1a" stroke-width="4.500" stroke-linecap="round"/><path d="M14.500 13.500l7.500 8.500" stroke="#e8c24a" stroke-width="2.800" stroke-linecap="round"/><path d="M13.500 6.500a4 4 0 1 0 2.500 6.500l-1.500-2.500-3 .5-1-2.500z" fill="#d8d8d8" stroke="#666" stroke-width="1"/></svg>
<svg class="ic" style="left:225px;top:36px" viewBox="0 0 24 24"><path d="M10 8.500h4.500M10 11.500h4.500M10 14.500h4.500" stroke="#cfccc7" stroke-width="1"/></svg>
<svg class="ic" style="left:248px;top:36px" viewBox="0 0 24 24"><path d="M7.500 13.500l-2.300-3.200q-1-1.300-2.200-.4-1 .9.100 2.600l4.600 7.200q1.500 2.300 4.300 2.300h3.500q3.500 0 4-3.500l.7-8.500q.1-1.800-1.300-1.900-1.400 0-1.600 1.600v-4.700q0-1.600-1.400-1.600-1.500 0-1.500 1.600v-2.300q0-1.600-1.500-1.600-1.400 0-1.400 1.600v1.500q0-1.500-1.500-1.500-1.500.1-1.500 1.600z" fill="#fff" stroke="#222" stroke-width="1.200" stroke-linejoin="round"/><path d="M10.500 4.500v6.500M13.400 3.500v7.500M16.300 5.500v5.500" stroke="#222" stroke-width="1"/></svg>
<svg class="ic" style="left:283.5px;top:36px" viewBox="0 0 24 24"><path d="M1.500 1.500h15v11h-15z" fill="#fbe64a" stroke="#333" stroke-width="1" stroke-dasharray="2 1.500"/><path d="M12 4.500l7.500 7.500-7.500 7.500-7.500-7.500z" fill="#eef2f7"/><path d="M12 1.500l4.800 5h-2.800v3.300h-4v-3.300h-2.800zM12 23l-4.800-5h2.800v-3.300h4v3.300h2.800zM1 12.300l5-4.800v2.800h3.300v4h-3.300v2.800zM23 12.300l-5 4.800v-2.800h-3.300v-4h3.300v-2.800z" fill="#5b8cc9" stroke="#3c6aa5" stroke-width=".7"/></svg>
<svg class="ic" style="left:319px;top:36px" viewBox="0 0 24 24"><path d="M2.500 21.500l7-7" stroke="#222" stroke-width="4" stroke-linecap="round"/><path d="M2.500 21.500l5.500-5.500" stroke="#e9b91e" stroke-width="2.400" stroke-linecap="round"/><circle cx="15" cy="9.500" r="7.800" fill="#eeeeec" stroke="#777" stroke-width="1.200"/><path d="M15 5v9M10.500 9.500h9" stroke="#4a7fc1" stroke-width="2.400"/></svg>
<svg class="ic" style="left:355.5px;top:36px" viewBox="0 0 24 24"><path d="M2.500 21.500l7-7" stroke="#222" stroke-width="4" stroke-linecap="round"/><path d="M2.500 21.500l5.500-5.500" stroke="#e9b91e" stroke-width="2.400" stroke-linecap="round"/><circle cx="15" cy="9.500" r="7.800" fill="#eeeeec" stroke="#777" stroke-width="1.200"/><path d="M10.500 9.500h9" stroke="#4a7fc1" stroke-width="2.400"/></svg>
<svg class="ic" style="left:392px;top:36px" viewBox="0 0 24 24"><path d="M2.500 21.500l7-7" stroke="#999" stroke-width="4" stroke-linecap="round"/><path d="M2.500 21.500l5.500-5.500" stroke="#ddd" stroke-width="2.400" stroke-linecap="round"/><circle cx="15" cy="9.500" r="7.800" fill="#eeeeec" stroke="#777" stroke-width="1.200"/><text x="15" y="13" font-family="Liberation Sans,sans-serif" font-weight="700" font-size="9.500" text-anchor="middle" fill="#aaa">1:1</text></svg>
<svg class="ic" style="left:428px;top:36px" viewBox="0 0 24 24"><path d="M3 3h7l-2.300 2.300 3 3-2.400 2.400-3-3L3 10zM21 3v7l-2.300-2.300-3 3-2.400-2.400 3-3L14 3zM21 21h-7l2.300-2.300-3-3 2.400-2.400 3 3L21 14z" fill="#5b8cc9" stroke="#3c6aa5" stroke-width=".7"/><path d="M2.500 21.500l6-6" stroke="#222" stroke-width="4" stroke-linecap="round"/><path d="M2.500 21.500l5-5" stroke="#e9b91e" stroke-width="2.400" stroke-linecap="round"/><circle cx="13" cy="10.500" r="6.300" fill="#e9e9e7" fill-opacity=".93" stroke="#888" stroke-width="1"/></svg>
<svg class="ic" style="left:463px;top:36px" viewBox="0 0 24 24"><rect x="1.500" y="2.500" width="14" height="13" fill="#f7e23c" stroke="#222" stroke-dasharray="2 1.500"/><path d="M2.500 21.500l7-7" stroke="#222" stroke-width="4" stroke-linecap="round"/><path d="M2.500 21.500l5.500-5.500" stroke="#e9b91e" stroke-width="2.400" stroke-linecap="round"/><circle cx="15" cy="9.500" r="7.800" fill="#eeeedd" fill-opacity=".85" stroke="#777" stroke-width="1.200"/></svg>
<svg class="ic" style="left:499px;top:36px" viewBox="0 0 24 24"><rect x="3" y="6" width="15" height="13" rx="1" fill="#b9a9bd" stroke="#8d7d92"/><path d="M2.500 21.500l7-7" stroke="#222" stroke-width="4" stroke-linecap="round"/><path d="M2.500 21.500l5.500-5.500" stroke="#e9b91e" stroke-width="2.400" stroke-linecap="round"/><circle cx="15" cy="9.500" r="7.800" fill="#e8e6e8" fill-opacity=".9" stroke="#777" stroke-width="1.200"/></svg>
<svg class="ic" style="left:535.5px;top:36px" viewBox="0 0 24 24"><path d="M2.500 21.500l7-7" stroke="#222" stroke-width="4" stroke-linecap="round"/><path d="M2.500 21.500l5.500-5.500" stroke="#e9b91e" stroke-width="2.400" stroke-linecap="round"/><circle cx="12" cy="9" r="7.800" fill="#eeeeec" stroke="#777" stroke-width="1.200"/><rect x="13.500" y="13.500" width="10.500" height="10.500" fill="#4a7fc1" stroke="#3565a3"/><path d="M21 16l-4.500 2.750 4.500 2.750" fill="none" stroke="#fff" stroke-width="1.800"/></svg>
<svg class="ic" style="left:571.5px;top:36px" viewBox="0 0 24 24"><path d="M2.500 21.500l7-7" stroke="#999" stroke-width="4" stroke-linecap="round"/><path d="M2.500 21.500l5.500-5.500" stroke="#ddd" stroke-width="2.400" stroke-linecap="round"/><circle cx="12" cy="9" r="7.800" fill="#eeeeec" stroke="#aaa" stroke-width="1.200"/><rect x="13.500" y="13.500" width="10.500" height="10.500" fill="#b5b5b5" stroke="#a0a0a0"/><path d="M16.500 16l4.500 2.750-4.500 2.750" fill="none" stroke="#fff" stroke-width="1.800"/></svg>
<svg class="ic" style="left:608px;top:36px" viewBox="0 0 24 24"><path d="M2 11q0-8 9-8 5 0 7.500 3l3-3v9.500h-9.500l3.300-3.300q-2-2.200-4.800-2.200-4 0-4.500 4z" fill="#4a86cf" stroke="#2f65a8" stroke-width=".8"/><path d="M22 13q0 8-9 8-5 0-7.500-3l-3 3v-9.500h9.500l-3.300 3.300q2 2.200 4.800 2.200 4 0 4.500-4z" fill="#4a86cf" stroke="#2f65a8" stroke-width=".8"/></svg>
<svg class="ic" style="left:634px;top:36px" viewBox="0 0 24 24"><path d="M10 8.500h4.500M10 11.500h4.500M10 14.500h4.500" stroke="#cfccc7" stroke-width="1"/></svg>
<svg class="ic" style="left:656px;top:36px" viewBox="0 0 24 24"><circle cx="9.500" cy="9.500" r="8.500" fill="#4a7fc1" stroke="#3565a3"/><text x="9.500" y="15" font-family="Liberation Serif,serif" font-style="italic" font-weight="700" font-size="15" text-anchor="middle" fill="#fff">i</text><path d="M12 9.5l0 13 3.200-3 2.600 5.500 2.400-1.100-2.600-5.400 4.400-.3z" fill="#fff" stroke="#222" stroke-width="1" stroke-linejoin="round"/></svg>
<svg class="ic" style="left:691px;top:36px" viewBox="0 0 24 24"><circle cx="10" cy="10" r="8" fill="#e4e4e4" stroke="#b3b3b3" stroke-width="1.200" stroke-dasharray="3.500 1.200"/><circle cx="10" cy="10" r="5" fill="#c8c8c8" stroke="#aaa"/><path d="M8 7l5 3-5 3z" fill="#fff"/><path d="M12 9.5l0 13 3.200-3 2.600 5.500 2.400-1.100-2.600-5.400 4.400-.3z" fill="#fff" stroke="#aaa" stroke-width="1" stroke-linejoin="round"/></svg>
<svg class="ic" style="left:721px;top:36px" viewBox="0 0 24 24"><path d="M8 10h8l-4 5z" fill="#bdbbb7"/></svg>
<svg class="ic" style="left:747.5px;top:36px" viewBox="0 0 24 24"><rect x="2" y="1" width="13" height="12" fill="#fbe64a" stroke="#c9b52b"/><rect x="17" y="1" width="6" height="12" fill="#e3e3e3" stroke="#aaa"/><rect x="2" y="15.500" width="13" height="7" fill="#e3e3e3" stroke="#aaa"/><path d="M10 7l0 13 3.200-3 2.600 5.500 2.400-1.100-2.600-5.400 4.400-.3z" fill="#fff" stroke="#111" stroke-width="1" stroke-linejoin="round"/></svg>
<svg class="ic" style="left:777px;top:36px" viewBox="0 0 24 24"><path d="M8 10h8l-4 5z" fill="#7b7974"/></svg>
<svg class="ic" style="left:805px;top:36px" viewBox="0 0 24 24"><rect x="1.500" y="3.500" width="15" height="15" fill="#fbe64a" stroke="#b79c1a" stroke-dasharray="2 1.500"/><rect x="12.500" y="13.500" width="10.500" height="10.500" rx="2.500" fill="#d9262c" stroke="#ad1a20"/><circle cx="17.750" cy="18.750" r="3.200" fill="none" stroke="#fff" stroke-width="1.300"/><path d="M15.500 21l4.500-4.500" stroke="#fff" stroke-width="1.300"/></svg>
<svg class="ic" style="left:842.5px;top:36px" viewBox="0 0 24 24"><text x="-1" y="15.500" font-family="Liberation Serif,serif" font-size="30" fill="#6b2d7b">ε</text><rect x="10.500" y="12.500" width="12" height="11.500" fill="#fbe64a" stroke="#b79c1a" stroke-dasharray="2 1.500"/></svg>
<svg class="ic" style="left:876.5px;top:36px" viewBox="0 0 24 24"><rect x="2.500" y="2.500" width="20" height="20" fill="#fff" stroke="#2d4f73" stroke-width="1.400"/><rect x="2.500" y="2.500" width="20" height="5" fill="#c9d6e5" stroke="#2d4f73" stroke-width="1.400"/><path d="M4.500 5h4M10 5h10M4.500 10.500h4M10 10.500h10M4.500 13.500h4M10 13.500h10M4.500 16.500h4M10 16.500h10M4.500 19.500h4M10 19.500h10" stroke="#2d4f73" stroke-width="1.400"/></svg>
<svg class="ic" style="left:913.5px;top:36px" viewBox="0 0 24 24"><path d="M3.500 1v21M20.500 1v21M2 22.500h20" stroke="#888" stroke-width="1.300" fill="none"/><path d="M3.500 5h17M3.500 11.500h17M3.500 18h17" stroke="#888" stroke-width="1"/><g fill="#e8e8e8" stroke="#777" stroke-width="1"><circle cx="12" cy="5" r="2.200"/><circle cx="17" cy="5" r="2.200"/><circle cx="7" cy="11.500" r="2.200"/><circle cx="12" cy="11.500" r="2.200"/><circle cx="7" cy="18" r="2.200"/><circle cx="16.500" cy="18" r="2.200"/></g></svg>
<svg class="ic" style="left:949px;top:36px" viewBox="0 0 24 24"><path d="M4 6.500h16M4 4v5M20 4v5" stroke="#2d4f73" stroke-width="1.500" fill="none"/><rect x="2.500" y="12.500" width="19" height="7" fill="#d8d8d0" stroke="#555"/><path d="M5.500 13v3M8.500 13v2M11.500 13v3M14.500 13v2M17.500 13v3" stroke="#555" stroke-width="1"/></svg>
<svg class="ic" style="left:977.5px;top:36px" viewBox="0 0 24 24"><path d="M8 10h8l-4 5z" fill="#7b7974"/></svg>
<svg class="ic" style="left:1005px;top:36px" viewBox="0 0 24 24"><path d="M5 2.500h13q3 0 3 3v6q0 3-3 3h-6.500l-4.500 4 1-4h-3q-3 0-3-3v-6q0-3 3-3z" fill="#fbe36a" stroke="#c9a227" stroke-width="1.200"/><path d="M5.500 4.500h12" stroke="#fff6c0" stroke-width="1.500" stroke-linecap="round"/></svg>
<svg class="ic" style="left:1042.5px;top:36px" viewBox="0 0 24 24"><rect x="1.500" y="5.500" width="15" height="10.500" fill="none" stroke="#444" stroke-width="1.200" stroke-dasharray="1.300 1.300"/><path d="M10 7.500v-3.500h2.500q0-2 2-2t2 2v3.500z" fill="#f0c93d" stroke="#b8900f" stroke-width=".8"/><rect x="11" y="12.500" width="10" height="10" rx="2" fill="#c9a21a" stroke="#a8850f"/><path d="M16 14v7M12.500 17.500h7M13.500 15l5 5M18.500 15l-5 5" stroke="#fff" stroke-width="1.100"/><circle cx="16" cy="17.500" r="1.500" fill="#fff"/><circle cx="16" cy="17.500" r=".7" fill="#c9a21a"/></svg>
<svg class="ic" style="left:1077.5px;top:36px" viewBox="0 0 24 24"><rect x="2.500" y="5.500" width="15" height="10.500" fill="none" stroke="#444" stroke-width="1.200" stroke-dasharray="1.300 1.300"/><path d="M10 7.500v-3.500h2.500q0-2 2-2t2 2v3.500z" fill="#f0c93d" stroke="#b8900f" stroke-width=".8"/></svg>
<svg class="ic" style="left:1115px;top:36px" viewBox="0 0 24 24"><path d="M5.500 2.500h17v14h-13l-6.500 4.500 2.500-4.500z" fill="#d5e0ea" stroke="#8a8a8a" stroke-width="1"/><text x="14" y="14" font-family="Liberation Serif,serif" font-size="13" text-anchor="middle" fill="#444">T</text></svg>
<svg class="ic" style="left:1141.5px;top:36px" viewBox="0 0 24 24"><path d="M8 10h8l-4 5z" fill="#7b7974"/></svg>
<svg class="ic" style="left:-4px;top:77px" viewBox="0 0 24 24"><path d="M10 8.500h4.500M10 11.500h4.500M10 14.500h4.500" stroke="#cfccc7" stroke-width="1"/></svg>
<svg class="ic" style="left:18px;top:76px" viewBox="0 0 24 24"><g transform="translate(-2 0)"><path d="M3 22l1.200-6 9.500-14 3.800 2.300-9.500 14z" fill="#d0d0d0" stroke="#a3a3a3" stroke-width="1" stroke-linejoin="round"/><path d="M6.500 15l9-13.300M8.800 16.500l8.500-12.800" stroke="#a3a3a3" stroke-width=".7"/><path d="M3 22l.6-3 2.100 1.300z" fill="#888"/></g><g transform="translate(2 0)"><path d="M3 22l1.200-6 9.500-14 3.800 2.300-9.500 14z" fill="#d0d0d0" stroke="#a3a3a3" stroke-width="1" stroke-linejoin="round"/><path d="M6.500 15l9-13.300M8.800 16.500l8.500-12.800" stroke="#a3a3a3" stroke-width=".7"/><path d="M3 22l.6-3 2.100 1.300z" fill="#888"/></g><g transform="translate(6 0)"><path d="M3 22l1.200-6 9.500-14 3.800 2.300-9.500 14z" fill="#d0d0d0" stroke="#a3a3a3" stroke-width="1" stroke-linejoin="round"/><path d="M6.500 15l9-13.300M8.800 16.500l8.500-12.800" stroke="#a3a3a3" stroke-width=".7"/><path d="M3 22l.6-3 2.100 1.300z" fill="#888"/></g></svg>
<svg class="ic" style="left:34px;top:78px" viewBox="0 0 24 24"><path d="M8 10h8l-4 5z" fill="#bdbbb7"/></svg>
<svg class="ic" style="left:60.5px;top:76px" viewBox="0 0 24 24"><g transform="translate(3 0)"><path d="M3 22l1.200-6 9.500-14 3.800 2.300-9.500 14z" fill="#d0d0d0" stroke="#a3a3a3" stroke-width="1" stroke-linejoin="round"/><path d="M6.500 15l9-13.300M8.800 16.500l8.500-12.800" stroke="#a3a3a3" stroke-width=".7"/><path d="M3 22l.6-3 2.100 1.300z" fill="#888"/></g></svg>
<svg class="ic" style="left:96.5px;top:76px" viewBox="0 0 24 24"><rect x="2" y="1.500" width="19" height="19.500" rx="2" fill="#b9b9b9" stroke="#a0a0a0"/><rect x="5.500" y="2" width="12" height="8.500" fill="#e9e9e9"/><path d="M7 4.500h9M7 6.500h9M7 8.500h9" stroke="#bbb" stroke-width=".8"/><rect x="6" y="13.500" width="9" height="6.500" fill="#dcdcdc" stroke="#aaa" stroke-width=".6"/><rect x="7.500" y="15" width="2.500" height="4" fill="#aaa"/><path d="M14.500 23l1-4.500 6-9 3 2-6 9z" fill="#c4c4c4" stroke="#999" stroke-linejoin="round"/></svg>
<svg class="ic" style="left:133px;top:76px" viewBox="0 0 24 24"><path d="M2.500 2.500l8 13 6-11.500 5.500-.5" fill="none" stroke="#999" stroke-width="1"/><g fill="#f2f1f0" stroke="#999" stroke-width="1"><circle cx="2.500" cy="2.500" r="1.500"/><circle cx="10.500" cy="15.500" r="1.500"/><circle cx="16.500" cy="4" r="1.500"/><circle cx="22" cy="3.500" r="1.500"/></g><rect x="13.5" y="13.5" width="10" height="10" rx="1.500" fill="#c3c3c3" stroke="#b0b0b0"/><path d="M18.5 15.0v7M15.0 18.5h7M16.2 16.2l4.600 4.600M20.8 16.2l-4.600 4.600" stroke="#fff" stroke-width="1.100"/><circle cx="18.5" cy="18.5" r="1.600" fill="#fff"/><circle cx="18.5" cy="18.5" r=".7" fill="#c3c3c3"/></svg>
<svg class="ic" style="left:169px;top:76px" viewBox="0 0 24 24"><path d="M2.500 7q0-4.500 6-4.500 3 0 6 1.500 3-1 5-.5 2.500.500 2 4-.5 4.500-5 4.500-3 0-6-2-3 2-5.500 1-2.500-1-2.500-4z" fill="#c9c9c9" stroke="#a3a3a3"/><rect x="13" y="13" width="10.500" height="11" fill="#a9a9a9" stroke="#999"/><rect x="13.500" y="13.500" width="9.500" height="5" fill="#d6d6d6"/><path d="M14.500 17.500h4.500v-2.500l4 4-4 4v-2.500h-4.500z" fill="#fff"/></svg>
<svg class="ic" style="left:205.5px;top:76px" viewBox="0 0 24 24"><path d="M3 20l7-16h12" fill="none" stroke="#999" stroke-width="1"/><circle cx="10" cy="4.500" r="2.300" fill="#d5d5d5" stroke="#999"/><path d="M12 20l8-9M19 20l-5-5.500" stroke="#8e8e8e" stroke-width="3" stroke-linecap="round"/><path d="M11.500 11.500l3-2.500 2.500 1-1 2.500z" fill="#8e8e8e"/></svg>
<svg class="ic" style="left:242px;top:76px" viewBox="0 0 24 24"><rect x="2.500" y="2.500" width="14" height="14" fill="#e3e3e3" stroke="#a8a8a8" stroke-dasharray="2 1.500"/><rect x="13.5" y="13.5" width="10" height="10" rx="1.500" fill="#bdbdbd" stroke="#a8a8a8"/><path d="M16.0 16.0l5 5M21.0 16.0l-5 5" stroke="#fff" stroke-width="1.800"/></svg>
<svg class="ic" style="left:277px;top:76px" viewBox="0 0 24 24"><path d="M1.500 8l17 9M1.500 12.500l17-7.500" stroke="#999" stroke-width="1.600" fill="none"/><path d="M2 8l11 4-11 .5z" fill="#ddd" stroke="#999" stroke-width=".7"/><ellipse cx="20" cy="6.500" rx="3" ry="2" fill="none" stroke="#888" stroke-width="1.500" transform="rotate(-25 20 6.500)"/><ellipse cx="20" cy="17.500" rx="3" ry="2" fill="none" stroke="#888" stroke-width="1.500" transform="rotate(55 20 17.500)"/></svg>
<svg class="ic" style="left:312px;top:76px" viewBox="0 0 24 24"><path d="M8.5 3.5h7l4 4v11h-11z" fill="#f4f4f4" stroke="#c4c4c4"/><path d="M15.5 3.5v4h4" fill="#e0e0e0" stroke="#c4c4c4" stroke-width=".8"/><path d="M3.5 6.5h7l4 4v12h-11z" fill="#f4f4f4" stroke="#a8a8a8"/><path d="M10.5 6.5v4h4" fill="#e0e0e0" stroke="#a8a8a8" stroke-width=".8"/><path d="M5.500 13h7M5.500 15h7M5.500 17h7M5.500 19h7" stroke="#b0b0b0" stroke-width=".9"/></svg>
<svg class="ic" style="left:348px;top:76px" viewBox="0 0 24 24"><rect x="3.500" y="3.500" width="16" height="19" fill="#e3e3e3" stroke="#aaa"/><rect x="7.500" y="1.500" width="8" height="4" rx="1" fill="#d0d0d0" stroke="#a0a0a0"/><path d="M6.5 6.5h6l4 4v10h-10z" fill="#f4f4f4" stroke="#a8a8a8"/><path d="M12.5 6.5v4h4" fill="#e0e0e0" stroke="#a8a8a8" stroke-width=".8"/><path d="M8.500 12h6M8.500 14h6M8.500 16h6M8.500 18h6" stroke="#b0b0b0" stroke-width=".9"/></svg>
<svg class="ic" style="left:384px;top:76px" viewBox="0 0 24 24"><rect x="2.500" y="1.500" width="10" height="5" fill="#c5c5c5" stroke="#999"/><path d="M7.500 2v4" stroke="#999"/><path d="M6.500 8.500l7 15 7-19.500-6.500 10z" fill="none" stroke="#999" stroke-width="1"/><g fill="#f2f1f0" stroke="#999"><circle cx="6.500" cy="8.500" r="1.300"/><circle cx="13.500" cy="23" r="1.300"/><circle cx="20.500" cy="4" r="1.300"/><circle cx="14" cy="14" r="1.300"/><circle cx="20" cy="9" r="1.300"/></g><rect x="15" y="13.500" width="9.500" height="10" rx="1.500" fill="#bdbdbd" stroke="#aaa"/><path d="M17 22l5-6" stroke="#fff" stroke-width="2"/></svg>
<svg class="ic" style="left:420.5px;top:76px" viewBox="0 0 24 24"><path d="M4 2.500l8-1 7.500 1.500 4 7-9 4.500-10.500 8.500z" fill="#cfcfcf" stroke="#999" stroke-width="1"/><path d="M4 2.500l10.500 12" stroke="#999"/><g fill="#f2f1f0" stroke="#8e8e8e"><circle cx="4" cy="2.500" r="1.600"/><circle cx="12" cy="2.500" r="1.600"/><circle cx="19.500" cy="3" r="1.600"/><circle cx="23" cy="10" r="1.600"/><circle cx="14.500" cy="14.500" r="1.600"/><circle cx="4" cy="22.500" r="1.600"/></g><path d="M16 18.500a4.200 4.200 0 1 0 6-4" fill="none" stroke="#8e8e8e" stroke-width="3.200"/><path d="M16 18.500a4.200 4.200 0 1 0 6-4" fill="none" stroke="#d8d8d8" stroke-width="1.400"/></svg>
<svg class="ic" style="left:447.5px;top:76px" viewBox="0 0 24 24"><path d="M10 8.500h4.500M10 11.500h4.500M10 14.500h4.500" stroke="#cfccc7" stroke-width="1"/></svg>
<svg class="ic" style="left:469.5px;top:76px" viewBox="0 0 24 24"><defs><radialGradient id="gl" cx=".4" cy=".3" r=".7"><stop offset="0" stop-color="#6fa6e6"/><stop offset="1" stop-color="#2b5fa8"/></radialGradient></defs><ellipse cx="12" cy="22.500" rx="8" ry="1.500" fill="#000" opacity=".18"/><circle cx="12" cy="11.500" r="10.500" fill="url(#gl)" stroke="#2a5590" stroke-width=".8"/><path d="M5 5q3-3 7-3l2 2-2 2.500-3 1 1 3-3 2.500-2.500-3zM13 8l5-2 3.500 4.500-1.500 6-3.500 3-2.500-4.500 1-3.500zM6 14l3 1 1 4-1 2.500q-3-2-4-5z" fill="#bcc832" stroke="#93a01e" stroke-width=".5"/></svg>
<svg class="ic" style="left:505.5px;top:76px" viewBox="0 0 24 24"><path d="M3 3l13 15" stroke="#444" stroke-width="3.400" stroke-linecap="round"/><path d="M3 3l5 5.800" stroke="#ddd" stroke-width="1.800" stroke-linecap="round"/><path d="M9.500 10.500l7 8" stroke="#f08a1e" stroke-width="2.400"/><path d="M3 21.500l13-14" stroke="#555" stroke-width="3.800" stroke-linecap="round"/><path d="M3 21.500l13-14" stroke="#d8d8d8" stroke-width="2.200" stroke-linecap="round"/><path d="M15 2.500a4.500 4.500 0 0 1 6.500 5.500l-3-.5-1.500-2.500 1.500-2.500z" fill="#d8d8d8" stroke="#555" stroke-width="1"/><rect x="13.500" y="13.500" width="10.500" height="10.500" rx="2" fill="#4e8f4a" stroke="#3b7538"/><path d="M18.750 15.500v6.500M15.500 18.750h6.500" stroke="#fff" stroke-width="2.200"/></svg>
<svg class="ic" style="left:541.5px;top:76px" viewBox="0 0 24 24"><path d="M3 22.500v-8l3.500-3.500 4.500-5 5.500 5.500h3l3.500 3v8z" fill="#8fc23a" stroke="#5f8a1c" stroke-width="1"/><path d="M2.500 1v22h21" fill="none" stroke="#777" stroke-width="1.200"/></svg>
<svg class="ic" style="left:578px;top:76px" viewBox="0 0 24 24"><rect x="0" y="0" width="24" height="24" fill="#2f64c9"/><path d="M6 4l5-1 4 2 3 4 3.500 2-3 4-3 4-5 2.500-3-2-1-5-2-4z" fill="#8a8a78" stroke="#5fb0d0" stroke-width=".8"/><path d="M8 5l4 0 3 4 2 3-3 2-4-3z" fill="#9cae6a"/><path d="M8 12l4 2 2 4-3 2-2-3z" fill="#6e6a60"/><path d="M12 9l3 1 1 3-3 1z" fill="#c8b48a"/></svg>
<svg class="ic" style="left:604px;top:76px" viewBox="0 0 24 24"><path d="M10 8.500h4.500M10 11.500h4.500M10 14.500h4.500" stroke="#cfccc7" stroke-width="1"/></svg>
<svg class="ic" style="left:626px;top:75px" viewBox="0 0 24 24"><path d="M2 9.500l8.500-7.500v4.500q11 0 11 8 0 6-7 7.500v-2q3.500-1.500 3.500-4.500 0-3.500-7.500-3.500v5z" fill="#c8c8c8" stroke="#adadad" stroke-linejoin="round"/></svg>
<svg class="ic" style="left:663px;top:75px" viewBox="0 0 24 24"><path d="M22 9.500l-8.500-7.500v4.500q-11 0-11 8 0 6 7 7.500v-2q-3.500-1.500-3.500-4.500 0-3.500 7.500-3.500v5z" fill="#c8c8c8" stroke="#adadad" stroke-linejoin="round"/></svg>
<svg class="ic" style="left:699px;top:75px" viewBox="0 0 24 24"><path d="M1.500 7.500q0-5 7-5 3 0 5.500 1 3-.5 5.500 0 2 1 1.500 4.500-1 5-5.500 4.500-3-.5-5-2-3.500 2.500-6 1.500-3-1-3-4.500z" fill="#c9c9c9" stroke="#a3a3a3"/><rect x="12" y="12.500" width="10.500" height="11" fill="#9a9a9a" stroke="#909090"/><rect x="12.500" y="13" width="9.500" height="5" fill="#bbb"/><path d="M15 20.500a3 3 0 1 1 4.500-.5M14 22.500h4v-3.500" fill="none" stroke="#fff" stroke-width="1.300"/></svg>
<svg class="ic" style="left:735px;top:76px" viewBox="0 0 24 24"><circle cx="8" cy="8.500" r="7.500" fill="#d0d0d0" stroke="#a0a0a0"/><path d="M12 9h7l4.500 7-4.500 7.500h-7l-4.500-7.500z" fill="#c6c6c6" stroke="#999"/><path d="M6 8q5-6 9 1.500v8M12 15l3 3.500 3-3.500" fill="none" stroke="#999" stroke-width="1.100"/></svg>
<svg class="ic" style="left:771px;top:75px" viewBox="0 0 24 24"><path d="M1.500 7.500q0-5 7-5 3 0 5.500 1 3-.5 5.500 0 2 1 1.500 4.500-1 5-5.500 4.500-3-.5-5-2-3.500 2.500-6 1.500-3-1-3-4.500z" fill="#c9c9c9" stroke="#a3a3a3"/><path d="M4.500 7q0-2.500 3.500-2.500 3.500 0 3 2-.5 2.500-3.500 2.500-3 0-3-2z" fill="#f2f1f0" stroke="#999" stroke-width=".8"/><rect x="12.5" y="13.5" width="10" height="10" rx="1.500" fill="#c3c3c3" stroke="#b0b0b0"/><path d="M17.5 15.0v7M14.0 18.5h7M15.2 16.2l4.600 4.600M19.8 16.2l-4.600 4.600" stroke="#fff" stroke-width="1.100"/><circle cx="17.5" cy="18.5" r="1.600" fill="#fff"/><circle cx="17.5" cy="18.5" r=".7" fill="#c3c3c3"/></svg>
<svg class="ic" style="left:807.5px;top:75px" viewBox="0 0 24 24"><path d="M1.500 7.500q0-5 7-5 3 0 5.500 1 3-.5 5.500 0 2 1 1.500 4.500-1 5-5.500 4.500-3-.5-5-2-3.500 2.500-6 1.500-3-1-3-4.500z" fill="#c9c9c9" stroke="#a3a3a3"/><path d="M2 21.500q0-5 4.500-7 3 0 3 3 0 4-4.500 5-3 .5-3-1z" fill="#bdbdbd" stroke="#a0a0a0"/><rect x="12.5" y="13.5" width="10" height="10" rx="1.500" fill="#c3c3c3" stroke="#b0b0b0"/><path d="M17.5 15.0v7M14.0 18.5h7M15.2 16.2l4.600 4.600M19.8 16.2l-4.600 4.600" stroke="#fff" stroke-width="1.100"/><circle cx="17.5" cy="18.5" r="1.600" fill="#fff"/><circle cx="17.5" cy="18.5" r=".7" fill="#c3c3c3"/></svg>
<svg class="ic" style="left:842.5px;top:75px" viewBox="0 0 24 24"><path d="M1.500 10q0-8 8-8 4 0 7 2.500 4 0 4.500 3.500l.5 6h-9l-3 3q-4 1.500-6.500-2-1.500-2-1.500-5z" fill="#d0d0d0" stroke="#a5a5a5"/><ellipse cx="8.500" cy="8" rx="4.500" ry="3.500" fill="#a8a8a8" stroke="#999" transform="rotate(-15 8.500 8)"/><rect x="12.5" y="13.5" width="10" height="10" rx="1.500" fill="#c3c3c3" stroke="#b0b0b0"/><path d="M17.5 15.0v7M14.0 18.5h7M15.2 16.2l4.600 4.600M19.8 16.2l-4.600 4.600" stroke="#fff" stroke-width="1.100"/><circle cx="17.5" cy="18.5" r="1.600" fill="#fff"/><circle cx="17.5" cy="18.5" r=".7" fill="#c3c3c3"/></svg>
<svg class="ic" style="left:878.5px;top:75px" viewBox="0 0 24 24"><path d="M1.500 7.500q0-5 7-5 3 0 5.500 1 3-.5 5.500 0 2 1 1.500 4.500-1 5-5.500 4.500-3-.5-5-2-3.500 2.500-6 1.500-3-1-3-4.500z" fill="#c9c9c9" stroke="#a3a3a3"/><path d="M4.500 7q0-2.500 3.500-2.500 3.500 0 3 2-.5 2.500-3.500 2.500-3 0-3-2z" fill="#f2f1f0" stroke="#999" stroke-width=".8"/><rect x="12.5" y="13.5" width="10" height="10" rx="1.500" fill="#bdbdbd" stroke="#a8a8a8"/><path d="M15.0 16.0l5 5M20.0 16.0l-5 5" stroke="#fff" stroke-width="1.800"/></svg>
<svg class="ic" style="left:915px;top:75px" viewBox="0 0 24 24"><path d="M1.500 7.500q0-5 7-5 3 0 5.500 1 3-.5 5.500 0 2 1 1.500 4.500-1 5-5.500 4.500-3-.5-5-2-3.500 2.500-6 1.500-3-1-3-4.500z" fill="#c9c9c9" stroke="#a3a3a3"/><path d="M2 21.500q0-5 4.500-7 3 0 3 3 0 4-4.500 5-3 .5-3-1z" fill="#bdbdbd" stroke="#a0a0a0"/><rect x="12.5" y="13.5" width="10" height="10" rx="1.500" fill="#bdbdbd" stroke="#a8a8a8"/><path d="M15.0 16.0l5 5M20.0 16.0l-5 5" stroke="#fff" stroke-width="1.800"/></svg>
<svg class="ic" style="left:950px;top:75px" viewBox="0 0 24 24"><path d="M2 7q0-4 6-4 4 0 7 1.500 3-1.500 5.500-.500 2 1 1.500 4.500-.5 4-5 4.500-3 0-5-2-2 2-4 6-2.500 3-4 0-2-5-2-10z" fill="#c9c9c9" stroke="#999"/><path d="M3.500 13q3 1 6.500-1.500-2 2-3.500 6-2 2-2.500 0z" fill="#e6e6e6" stroke="#aaa" stroke-width=".6"/></svg>
<svg class="ic" style="left:986.5px;top:75px" viewBox="0 0 24 24"><path d="M1.500 9q0-7 8-7.500 5 0 8 2 5 1 5 6 0 7-6 7-3 0-5-2-3 3-6.500 2-3.500-1.500-3.500-7.500z" fill="#e0e0e0" stroke="#909090" stroke-width="1.100"/><path d="M5 9q0-4 5-4 4 0 6.500 2 3 .5 3 3 0 3.500-3 3.500-2.500 0-5-2-3 2.500-5 1.500-1.500-1-1.500-4z" fill="#c2c2c2" stroke="#b0b0b0" stroke-width=".7"/></svg>
<svg class="ic" style="left:1022.5px;top:76px" viewBox="0 0 24 24"><path d="M2.500 6q0-4.500 6-4.500 2.500 0 3.500 1v9q-2.500 3-5 2-4.500-2-4.500-7.500z" fill="#c6c6c6" stroke="#999"/><path d="M14 2.500q3-1.500 6.500-.500 2 1 1.500 4.500-1 5.500-5 5.500-2 0-3-1z" fill="#c6c6c6" stroke="#999"/><path d="M13 0v7" stroke="#999"/><path d="M11 6l2.500 10M15 6l-2 10" stroke="#909090" stroke-width="1.200"/><ellipse cx="10" cy="20" rx="1.800" ry="3" fill="none" stroke="#8a8a8a" stroke-width="1.400" transform="rotate(20 10 20)"/><ellipse cx="16.500" cy="20" rx="1.800" ry="3" fill="none" stroke="#8a8a8a" stroke-width="1.400" transform="rotate(-20 16.500 20)"/></svg>
<svg class="ic" style="left:1059px;top:76px" viewBox="0 0 24 24"><path d="M3.500 6q0-4.500 5.500-4.500 2 0 3 1v7q-2 2.500-4.500 2-4-1.500-4-5.500z" fill="#c6c6c6" stroke="#999"/><path d="M14 2.500q3-1.500 5.500-.500 2 1 1.500 4-.5 3.500-4 3.500-2 0-3-1z" fill="#c6c6c6" stroke="#999"/><path d="M1 12.500l5-1 1 4.500-5 1.500zM18 11l4.500 1.500.5 4-5 .5-1.500-3z" fill="#d0d0d0" stroke="#aaa"/><path d="M13 0v7" stroke="#999"/><path d="M11 6l2.500 10M15 6l-2 10" stroke="#909090" stroke-width="1.200"/><ellipse cx="10" cy="20" rx="1.800" ry="3" fill="none" stroke="#8a8a8a" stroke-width="1.400" transform="rotate(20 10 20)"/><ellipse cx="16.500" cy="20" rx="1.800" ry="3" fill="none" stroke="#8a8a8a" stroke-width="1.400" transform="rotate(-20 16.500 20)"/></svg>
<svg class="ic" style="left:1095px;top:76px" viewBox="0 0 24 24"><path d="M1.500 7q0-5 6-5 3 0 5 1.500 2.500-1.500 5.500-1.500 5 0 4.500 5.500-.5 7-6 7-3 0-5-2-2 2-4.500 2-5.500-1-5.500-7.500z" fill="#c6c6c6" stroke="#999"/><path d="M12.500 3.500v11.500q1.500 2.500-.5 3.500t.5 2.500q2 1 2.500 2.500" fill="none" stroke="#888" stroke-width="1.100"/><path d="M10.500 5h5M10.500 7.500h5M10.500 10h5M10.500 12.500h5" stroke="#fff" stroke-width="1.200"/><path d="M10.500 5h5M10.500 7.500h5M10.500 10h5M10.500 12.500h5" stroke="#888" stroke-width=".5"/></svg>
<svg class="ic" style="left:1131.5px;top:76px" viewBox="0 0 24 24"><path d="M10 9l4-9h9l-5 10z" fill="#c9c9c9" stroke="#999"/><path d="M9 9.500l6 3-2 3.500-3-.5z" fill="#b5b5b5" stroke="#999"/><path d="M12 13.500l-2.500 5.500h5.500z" fill="#f4f4f4" stroke="#999"/><rect x="2.500" y="18.500" width="19" height="5" fill="#b5b5b5" stroke="#999"/><path d="M12 15.500l-2 3.500h4z" fill="#f2f1f0" stroke="#999" stroke-width=".7"/></svg>
<svg class="ic" style="left:1167px;top:76px" viewBox="0 0 24 24"><path d="M16.500 7.500A7.800 7.800 0 1 0 17 19.500" fill="none" stroke="#aaa" stroke-width="3.400"/><path d="M16.500 7.500A7.800 7.800 0 1 0 17 19.500" fill="none" stroke="#d0d0d0" stroke-width="2"/><path d="M12.500 5.500l9.500-2-1.500 9.500z" fill="#c4c4c4" stroke="#aaa" stroke-width=".8"/></svg>
<svg class="ic" style="left:1193px;top:76px" viewBox="0 0 24 24"><path d="M10 8.500h4.500M10 11.500h4.500M10 14.500h4.500" stroke="#cfccc7" stroke-width="1"/></svg>
<svg class="ic" style="left:1206px;top:76px" viewBox="0 0 24 24"><path d="M10 8.500h4.500M10 11.500h4.500M10 14.500h4.500" stroke="#cfccc7" stroke-width="1"/></svg>
<svg class="ic" style="left:20px;top:100px" viewBox="0 0 24 24"><path d="M8.500 9v5M12.500 9v5M16.500 9v5" stroke="#c9c6c1" stroke-width="1"/></svg>
<svg class="ic" style="left:20px;top:124px" viewBox="0 0 24 24"><path d="M4 3l7 14.500 5-13.500 6-.500" fill="none" stroke="#34495e" stroke-width="1.300"/><g fill="#f2f1f0" stroke="#34495e" stroke-width="1.100"><circle cx="4" cy="3" r="1.800"/><circle cx="11" cy="17.500" r="1.800"/><circle cx="16" cy="4" r="1.800"/><circle cx="22" cy="3.500" r="1.800"/></g><rect x="13.5" y="13.5" width="10" height="10" rx="2" fill="#5b9a57" stroke="#447c40"/><path d="M18.5 15.5v6M15.5 18.5h6" stroke="#fff" stroke-width="2"/></svg>
<svg class="ic" style="left:20px;top:160px" viewBox="0 0 24 24"><rect x="2" y="2" width="20" height="16" fill="#6d9bd1"/><g fill="#1d3557"><rect x="2" y="2" width="6.500" height="5.300"/><rect x="15.500" y="2" width="6.500" height="5.300"/><rect x="8.500" y="7.300" width="7" height="5.400"/><rect x="2" y="12.700" width="6.500" height="5.300"/></g><g fill="#8fb5e0"><rect x="8.500" y="2" width="7" height="5.300"/><rect x="8.500" y="12.700" width="7" height="5.300"/></g><rect x="14" y="14" width="10" height="10" rx="2" fill="#5b9a57" stroke="#447c40"/><path d="M19 16v6M16 19h6" stroke="#fff" stroke-width="2"/></svg>
<svg class="ic" style="left:20px;top:196px" viewBox="0 0 24 24"><path d="M4 12q-2.500-1-2.500-5 0-5 5.500-5.500 3-1 6 0 6 .500 6 5.500 0 4-2 5v3q1.500 0 2 1-1 2-4 1.500l-.5 1.500q-.5 2-2.500 2t-2.500-2l-.5-6q-3 1.500-5-1z" fill="#5d8fc9" stroke="#2f4f7a" stroke-width="1"/><path d="M7 4q-2.500 1-2 5 .5 2.500 2 2.500M14 4q3 1 2.500 5" fill="none" stroke="#2f4f7a" stroke-width="1"/><circle cx="8.500" cy="6" r=".8" fill="#fff"/><circle cx="12.500" cy="6" r=".8" fill="#fff"/><rect x="14" y="14" width="10" height="10" rx="2" fill="#5b9a57" stroke="#447c40"/><path d="M19 16v6M16 19h6" stroke="#fff" stroke-width="2"/></svg>
<svg class="ic" style="left:20px;top:232px" viewBox="0 0 24 24"><path d="M2.500 22.500q2-9 7-14.500 5-5 12-6.500-1 8-6 12.500-4 3.500-10 4.500z" fill="#5d8fc9" stroke="#1d3557" stroke-width="1"/><path d="M2.500 22.500q6-10 18-20" fill="none" stroke="#cfe0f3" stroke-width="1.100"/><path d="M7 14l6 .5M10 10l7 .5M13.500 6.500l6 0" stroke="#cfe0f3" stroke-width=".7"/><rect x="14" y="14" width="10" height="10" rx="2" fill="#5b9a57" stroke="#447c40"/><path d="M19 16v6M16 19h6" stroke="#fff" stroke-width="2"/></svg>
<svg class="ic" style="left:20px;top:268px" viewBox="0 0 24 24"><path d="M3 2q9 1 19 9.500-5 .5-9 4-5 4-10 6.500 5.500-10 0-20z" fill="#5d8fc9" stroke="#1d3557" stroke-width="1.200" stroke-linejoin="round"/><path d="M8 4.500q4 8-1 15M13 7q3.500 5-1 9.500M17.500 9.500q1.500 2.500 0 4" fill="none" stroke="#1d3557" stroke-width=".9"/><rect x="14" y="14" width="10" height="10" rx="2" fill="#5b9a57" stroke="#447c40"/><path d="M19 16v6M16 19h6" stroke="#fff" stroke-width="2"/></svg>
<svg class="ic" style="left:20px;top:304px" viewBox="0 0 24 24"><circle cx="11.500" cy="11" r="10.300" fill="#7ea6d8" stroke="#3f6aa3" stroke-width="1"/><path d="M4 6l4-2.500 3 1 4-1.500 4 2.500-1 3-3 0-1 3 3 2-1 3.500-3-1-2 3-4-1-1-4-3-2z" fill="#dfe9f5" opacity=".9"/><path d="M1.500 11h20M11.500 1v20M4 5q7.500 3.500 15 0M4 17q7.500-3.500 15 0" stroke="#5c88c1" stroke-width=".6" fill="none"/><rect x="14" y="14" width="10" height="10" rx="2" fill="#5b9a57" stroke="#447c40"/><path d="M19 16v6M16 19h6" stroke="#fff" stroke-width="2"/></svg>
<svg class="ic" style="left:20px;top:340px" viewBox="0 0 24 24"><ellipse cx="11.500" cy="11" rx="11" ry="10" fill="#4a7fc1" stroke="#16263d" stroke-width="1.500"/><path d="M.5 7.500h22M.5 14.500h22" stroke="#dfe9f5" stroke-width="1.600"/><ellipse cx="11.500" cy="11" rx="5" ry="10" fill="none" stroke="#dfe9f5" stroke-width="1.500"/><path d="M2 14.500h19v1q-4 5.500-9.500 5.500t-9.500-5.500z" fill="#16263d" opacity=".55"/><ellipse cx="11.500" cy="11" rx="11" ry="10" fill="none" stroke="#16263d" stroke-width="1.500"/><rect x="14" y="14" width="10" height="10" rx="2" fill="#5b9a57" stroke="#447c40"/><path d="M19 16v6M16 19h6" stroke="#fff" stroke-width="2"/></svg>
<svg class="ic" style="left:20px;top:376px" viewBox="0 0 24 24"><circle cx="11.500" cy="11" r="10.300" fill="#eef3fa" stroke="#4a7fc1" stroke-width="1.200"/><path d="M1.500 11h20M3 6h17M3 16h17M11.500 1v20" stroke="#7ea6d8" stroke-width=".9" fill="none"/><ellipse cx="11.500" cy="11" rx="5.500" ry="10.300" fill="none" stroke="#7ea6d8" stroke-width=".9"/><path d="M5 6l5 11 4-10 4.500-.5" fill="none" stroke="#1d3557" stroke-width="1.300"/><g fill="#fff" stroke="#1d3557"><circle cx="5" cy="6" r="1.400"/><circle cx="10" cy="17" r="1.400"/><circle cx="14" cy="7" r="1.400"/><circle cx="18.500" cy="6.500" r="1.400"/></g><rect x="14" y="14" width="10" height="10" rx="2" fill="#5b9a57" stroke="#447c40"/><path d="M19 16v6M16 19h6" stroke="#fff" stroke-width="2"/></svg>
<svg class="ic" style="left:20px;top:412px" viewBox="0 0 24 24"><path d="M9 3q5-1 7 2.500 1.800 3.500-.8 7.500-2.200 3-7 5.200l-.9-1.300q4.400-3 4.400-6.100-3 1.300-5.200-.9-1.800-2.600.4-5.200.9-1.300 2.100-1.700z" fill="#4a7fc1" stroke="#35609a" stroke-width=".8"/><rect x="14" y="14" width="10" height="10" rx="2" fill="#5b9a57" stroke="#447c40"/><path d="M19 16v6M16 19h6" stroke="#fff" stroke-width="2"/></svg>
<svg class="ic" style="left:10px;top:448px" viewBox="0 0 24 24"><path d="M4 3l7 14.500 5-13.500 6-.500" fill="none" stroke="#34495e" stroke-width="1.300"/><g fill="#f2f1f0" stroke="#34495e" stroke-width="1.100"><circle cx="4" cy="3" r="1.800"/><circle cx="11" cy="17.500" r="1.800"/><circle cx="16" cy="4" r="1.800"/><circle cx="22" cy="3.500" r="1.800"/></g><rect x="16" y="15" width="9" height="9" rx="1.500" fill="#d4aa1a" stroke="#b8900f"/><path d="M20.500 16.500v6M17.500 19.500h6M18.300 17.300l4.400 4.400M22.700 17.300l-4.400 4.400" stroke="#fff" stroke-width="1.100"/></svg>
<svg class="ic" style="left:38px;top:450px" viewBox="0 0 24 24"><path d="M8 10h8l-4 5z" fill="#7b7974"/></svg>
<svg class="ic" style="left:20px;top:485px" viewBox="0 0 24 24"><rect x="2.500" y="2.500" width="19" height="19" fill="#f4f4f4" stroke="#8a8a8a"/><rect x="15.500" y="15.500" width="9" height="8" rx="2" fill="#ea4b5a" stroke="#d8303f"/><path d="M17.500 19.500h5" stroke="#fff" stroke-width="1.800"/></svg>
<!-- layer dock -->
<div class="t" style="left:65px;top:112px;font-size:15px;letter-spacing:-.55px">Layer</div>
<svg class="abs" style="left:332px;top:114.500px" width="30" height="12" viewBox="0 0 30 12">
 <rect x=".5" y=".5" width="10.500" height="10.500" rx="2" fill="#f6f5f4" stroke="#5e5c58"/><rect x="4.500" y="2.500" width="4.500" height="4.500" fill="#f6f5f4" stroke="#5e5c58" stroke-width=".9"/><rect x="2.500" y="4.500" width="4.500" height="4.500" fill="#f6f5f4" stroke="#5e5c58" stroke-width=".9"/>
 <rect x="17.500" y=".5" width="10.500" height="10.500" rx="2" fill="#f6f5f4" stroke="#5e5c58"/><path d="M20 3l5.500 5.500M25.500 3l-5.500 5.500" stroke="#3c3b37" stroke-width="1.800"/>
</svg>
<div class="abs" style="left:62px;top:133px;width:301px;height:550px;background:#fff;border:1px solid #c3c0bb"></div>
<div class="abs" style="left:63px;top:174px;width:299px;height:22px;background:linear-gradient(#ecebea,#dcdbd9);border-top:1px solid #d4d2cf;border-bottom:1px solid #d0cecb"></div>
<!-- tree arrows -->
<svg class="abs" style="left:70px;top:140px" width="12" height="8"><path d="M2.200 1.500h7.200l-3.600 5.600z" fill="#6b6b6b" stroke="#4a4a4a" stroke-width=".5"/></svg>
<svg class="abs" style="left:70px;top:180px" width="12" height="8"><path d="M2.200 1.500h7.200l-3.600 5.600z" fill="#6b6b6b" stroke="#4a4a4a" stroke-width=".5"/></svg>
<!-- checkboxes -->
<div class="abs" style="left:89px;top:138px;width:14px;height:14px;border:1px solid #b5b2ad;border-radius:2.500px;background:#fff"></div>
<svg class="abs" style="left:89px;top:177px" width="16" height="16" viewBox="0 0 16 16"><rect x=".5" y="1.500" width="13" height="13" rx="2.500" fill="#f07746" stroke="#c85a2c"/><path d="M3 7.500l3 4.500 7.500-10" fill="none" stroke="#4d2a1c" stroke-width="1.900"/></svg>
<svg class="abs" style="left:89px;top:217px" width="16" height="16" viewBox="0 0 16 16"><rect x=".5" y="1.500" width="13" height="13" rx="2.500" fill="#f07746" stroke="#c85a2c"/><path d="M3 7.500l3 4.500 7.500-10" fill="none" stroke="#4d2a1c" stroke-width="1.900"/></svg>
<!-- layer type icons -->
<svg class="abs" style="left:111px;top:137px" width="18" height="16" viewBox="0 0 18 16"><path d="M1.500 4q0-2.500 4-2 3 1 6 0 4.500-1 5 2 .5 4-1.500 6-2 .5-3.500-1.500-2.500-1.500-5 .5-2 2.500-4.500 1-1-3-.5-6z" fill="#e3e3e3" stroke="#a8a8a8"/></svg>
<svg class="abs" style="left:111px;top:177px" width="18" height="16" viewBox="0 0 18 16"><path d="M2 2.500l5 11 5-10.500 4-.5" fill="none" stroke="#c98a6a" stroke-width="1"/><g fill="#fff" stroke="#c98a6a" stroke-width=".8"><circle cx="2" cy="2.500" r="1.200"/><circle cx="7" cy="13.500" r="1.200"/><circle cx="12" cy="3" r="1.200"/><circle cx="16" cy="2.500" r="1.200"/></g></svg>
<svg class="abs" style="left:112px;top:217px" width="16" height="16" viewBox="0 0 16 16"><rect width="16" height="16" fill="#c9c9c9"/><g fill="#9a9a9a"><rect x="0" y="0" width="5.300" height="5.300"/><rect x="5.300" y="5.300" width="5.400" height="5.400"/><rect x="0" y="10.700" width="5.300" height="5.300"/></g><g fill="#b0b0b0"><rect x="10.700" y="0" width="5.300" height="5.300"/><rect x="10.700" y="10.700" width="5.300" height="5.300" fill="#dcdcdc"/><rect x="5.300" y="0" width="5.400" height="5.300" fill="#d6d6d6"/></g></svg>
<div class="t b" style="left:134.500px;top:137px;letter-spacing:-.28px">ne_10m_geography_regions_...</div>
<div class="t b" style="left:134.500px;top:177px;letter-spacing:-.3px;text-decoration:underline;text-underline-offset:2px">ne_10m_graticules_10</div>
<div class="abs" style="left:106px;top:204.500px;width:16px;height:1.300px;background:#7a4c12"></div>
<div class="t b" style="left:134.500px;top:217px;letter-spacing:-.83px">NE2_HR_LC_SR_W_DR</div>
<!-- tabs -->
<div class="abs" style="left:115px;top:683px;width:140px;height:26px;background:linear-gradient(#e6e5e3,#d9d7d4);border:1px solid #c3c0bb;border-top-color:#b8b5b0;border-radius:0 0 4px 0"></div>
<div class="abs" style="left:62px;top:682px;width:53px;height:30px;background:linear-gradient(#f8f8f7,#f2f1f0);border:1px solid #b8b5b0;border-top:1px solid #d9d7d3;border-radius:0 0 4px 4px"></div>
<div class="t" style="left:69px;top:689px;letter-spacing:-.55px">Layer</div>
<div class="t" style="left:123px;top:688px;letter-spacing:.14px">Layerreihenfolge</div>
<!-- layer properties dialog -->
<div class="abs" style="left:243px;top:293px;width:1001px;height:415px;border-radius:6px 6px 0 0;box-shadow:0 1px 6px 1px rgba(0,0,0,.5),0 0 1px rgba(0,0,0,.6);background:#f2f1f0"></div>
<div class="titlebar" style="left:243px;top:293px;width:1001px;height:27.500px;border-radius:6px 6px 0 0;border-top:1px solid #64625b"></div>
<svg class="abs" style="left:253px;top:298px" width="40" height="20" viewBox="0 0 40 20">
 <defs><linearGradient id="cb" x1="0" x2="0" y1="0" y2="1"><stop offset="0" stop-color="#f58a5c"/><stop offset="1" stop-color="#de4e21"/></linearGradient><linearGradient id="gb" x1="0" x2="0" y1="0" y2="1"><stop offset="0" stop-color="#8b8982"/><stop offset="1" stop-color="#6a6862"/></linearGradient></defs>
 <circle cx="9.500" cy="9.500" r="7.800" fill="url(#cb)" stroke="#2c2b28" stroke-width="1"/>
 <circle cx="27.500" cy="9.500" r="7.800" fill="url(#gb)" stroke="#2c2b28" stroke-width="1"/>
 <path d="M6.800 6.800l5.400 5.400M12.200 6.800l-5.400 5.400" stroke="#3e1a0c" stroke-width="1.200"/>
 <rect x="24.500" y="6.500" width="6" height="6" fill="none" stroke="#33322e" stroke-width="1.300"/>
</svg>
<div class="t b" style="left:301px;top:298px;color:#dfdbd2;letter-spacing:-.07px">Layereigenschaften - ne_10m_graticules_10 | Stil</div>
<!-- sidebar -->
<div class="abs" style="left:243px;top:320.500px;width:160px;height:387.500px;background:#5c5c5c"></div>
<div class="abs" style="left:243px;top:357px;width:160px;height:36px;background:#f2f1f0"></div>
<div class="t" style="left:281px;top:331px;color:#f4f4f4;letter-spacing:0.06px">Allgemein</div>
<div class="t" style="left:284px;top:367px;color:#1a1a1a">Stil</div>
<div class="t" style="left:281px;top:403px;color:#f4f4f4;letter-spacing:.09px">Beschriftungen</div>
<div class="t" style="left:281px;top:439px;color:#f4f4f4;letter-spacing:-0.09px">Felder</div>
<div class="t" style="left:281px;top:475px;color:#f4f4f4;letter-spacing:0.07px">Darstellung</div>
<div class="t" style="left:281px;top:511px;color:#f4f4f4;letter-spacing:-0.16px">Anzeigen</div>
<div class="t" style="left:281px;top:547px;color:#f4f4f4;letter-spacing:0.17px">Aktionen</div>
<div class="t" style="left:281px;top:583px;color:#f4f4f4;letter-spacing:0.12px">Verknüpfungen</div>
<div class="t" style="left:281px;top:619px;color:#f4f4f4;letter-spacing:-0.16px">Diagramme</div>
<div class="t" style="left:281px;top:655px;color:#f4f4f4;letter-spacing:0.18px">Metadaten</div>
<!-- sidebar icons -->
<svg class="ic" style="left:249px;top:327px" viewBox="0 0 24 24"><path d="M2.500 2.500l9.500 10" stroke="#ececec" stroke-width="1.500" stroke-linecap="round"/><path d="M2 2l2 2" stroke="#fff" stroke-width="1.800" stroke-linecap="round"/><path d="M12 12l9.500 9.500" stroke="#b85000" stroke-width="5" stroke-linecap="round"/><path d="M12 12l9.500 9.500" stroke="#f57c14" stroke-width="3.300" stroke-linecap="round"/><path d="M13 11.500l8.500 8.500M11.500 13l8.500 8.500" stroke="#d96808" stroke-width=".6"/><path d="M3 21.500l10.500-11" stroke="#1d3f78" stroke-width="4.800" stroke-linecap="round"/><path d="M3 21.500l10.500-11" stroke="#3f74c4" stroke-width="3" stroke-linecap="round"/><path d="M9.500 3q4.500-3 9.500-.5 3.500 2 4 6.500l-2 .8q-.5-2-2-2.600l-3.600 4.200-3-2.600 3.600-4.200q-2.500-1.500-5.500.3z" fill="#363a3f" stroke="#1e2024" stroke-width=".6"/></svg>
<svg class="ic" style="left:252px;top:364.500px" viewBox="0 0 24 24"><path d="M4 6l9 1.500-2 4.500-8.500-1z" fill="#f2d03a"/><path d="M2.500 11l8.500 1-2 4.500-8-1.500z" fill="#e8463a"/><path d="M1 15l8 1.500-2 4-6.500-2z" fill="#e8463a" opacity=".45"/><path d="M3.500 8.500l9 1.200-1 2.300-8.700-1z" fill="#5b7fc4" opacity=".8"/><path d="M22.500 2l1.500 1.500-7 8.500-2-1.500z" fill="#d9913f" stroke="#a8651e" stroke-width=".6"/><path d="M9.500 12.500l5.500-3.500 5 6-6.500 6.500q-1.500.500-2.500-.5l-3-4.500z" fill="#e3a052" stroke="#a8651e" stroke-width=".8"/><path d="M11 14l5 6M13 12.500l5 6" stroke="#b5742a" stroke-width=".7"/></svg>
<svg class="ic" style="left:249px;top:399px" viewBox="0 0 24 24"><path d="M7 5.500h15.500q1.500 0 1.500 1.500v10q0 1.500-1.500 1.500h-15.500l-6.500-6.500z" fill="#f5d93a" stroke="#b89a12" stroke-width="1"/><text x="14.500" y="15.500" font-family="Liberation Sans,sans-serif" font-weight="700" font-size="9.500" text-anchor="middle" fill="#2a2a2a">abc</text></svg>
<svg class="ic" style="left:249px;top:435px" viewBox="0 0 24 24"><rect x="1" y="2.500" width="22" height="19.500" fill="#e9e9e4" stroke="#9a9a95" stroke-width=".8"/><rect x="1" y="2.500" width="22" height="4" fill="#5d8fd1"/><path d="M1 10.500h22M1 14.500h22M1 18.500h22M8 6.500v15.500M16 6.500v15.500" stroke="#b5b5ae" stroke-width="1.100"/></svg>
<svg class="ic" style="left:249px;top:471px" viewBox="0 0 24 24"><path d="M21 1.500l1.800 1.500-9 10-2-1.700z" fill="#d9913f" stroke="#9a5a18" stroke-width=".7"/><path d="M7.500 9.500l7.500 7-6 6.500-8.500-8z" fill="#d9953f" stroke="#9a5a18" stroke-width=".8"/><path d="M9.500 8l3-1 4.500 4.500-1.500 3.500-7-6z" fill="#c27f2e" stroke="#9a5a18" stroke-width=".7"/><path d="M3 16.500l6 5.500M5 14l6 6M7 12l6 5.500" stroke="#a8691e" stroke-width=".7"/></svg>
<svg class="ic" style="left:249px;top:507px" viewBox="0 0 24 24"><path d="M4.500 1.500h15q3.500 0 3.500 3.500v6.500q0 3.500-3.500 3.500h-8l-5.500 6 1-6h-2.500q-3.500 0-3.500-3.500v-6.500q0-3.500 3.500-3.500z" fill="#e3d77a" stroke="#b5a63a" stroke-width="1"/><path d="M5 4.500q1-1.500 4-1.500" stroke="#fdf9d8" stroke-width="1.600" fill="none" stroke-linecap="round"/></svg>
<svg class="ic" style="left:249px;top:543px" viewBox="0 0 24 24"><circle cx="15" cy="10" r="8.300" fill="none" stroke="#4a4a4a" stroke-width="3.600" stroke-dasharray="3.500 3"/><circle cx="15" cy="10" r="8.300" fill="none" stroke="#e2e2e2" stroke-width="2.600" stroke-dasharray="3.100 3.400" stroke-dashoffset="-.2"/><circle cx="15" cy="10" r="7.200" fill="#e6e6e6" stroke="#555" stroke-width=".7"/><circle cx="15" cy="10" r="5" fill="#4a86d8" stroke="#2d5fa3"/><path d="M13.300 7.200l4.800 2.800-4.800 2.800z" fill="#fff"/><circle cx="4.500" cy="20" r="3.400" fill="#5d8fd1" stroke="#bdbdbd" stroke-width="1.200" stroke-dasharray="1.600 1.100"/></svg>
<svg class="ic" style="left:249px;top:579px" viewBox="0 0 24 24"><defs><linearGradient id="vk" x1="0" x2="0" y1="0" y2="1"><stop offset="0" stop-color="#8db8ec"/><stop offset=".5" stop-color="#3f74c4"/><stop offset="1" stop-color="#2a5596"/></linearGradient></defs><path d="M5.500 12l11.500-10.500v5h7v11h-7v5z" fill="url(#vk)" stroke="#274d87" stroke-width=".8" stroke-linejoin="round"/><circle cx="2.500" cy="12" r="2.300" fill="#3f74c4" stroke="#274d87" stroke-width=".7"/></svg>
<svg class="ic" style="left:249px;top:615px" viewBox="0 0 24 24"><rect x=".5" y="4.500" width="23.500" height="15" fill="#e4e4e0" stroke="#b5b5b0"/><path d="M.8 4v16" stroke="#444" stroke-width="1.200"/><path d="M12 8l4 1 3-1 3 2-1 4-4 2-5-1z" fill="#cfcfca"/><circle cx="8.500" cy="12" r="5" fill="#f2d03a"/><path d="M8.500 12v-5a5 5 0 0 1 5 5z" fill="#d9342a"/><path d="M8.500 12h-5a5 5 0 0 1 1.500-3.500z" fill="#3f74c4"/><path d="M8.500 12l-3.500 3.500a5 5 0 0 1-1.500-3.500z" fill="#fff"/></svg>
<svg class="ic" style="left:249px;top:651px" viewBox="0 0 24 24"><defs><linearGradient id="mi" x1="0" x2="0" y1="0" y2="1"><stop offset="0" stop-color="#7eaeea"/><stop offset="1" stop-color="#3f74c4"/></linearGradient></defs><circle cx="12" cy="12" r="11.500" fill="url(#mi)" stroke="#3565a3" stroke-width=".8"/><text x="12" y="19.500" font-family="Liberation Serif,serif" font-style="italic" font-weight="700" font-size="21" text-anchor="middle" fill="#fff">i</text></svg>
<!-- dialog content: Layerdarstellung -->
<svg class="abs" style="left:411px;top:331px" width="12" height="9"><path d="M.5 .5h11l-5.500 7.500z" fill="#2e2e2e"/></svg>
<div class="t" style="left:431px;top:325px">Layerdarstellung</div>
<div class="t" style="left:426px;top:355px;letter-spacing:-.1px">Layertransparenz</div>
<div class="abs" style="left:628px;top:361px;width:519px;height:5px;border-radius:2.500px;background:#e4e2df;border:1px solid #bfbbb5;border-bottom-color:#fbfbfa"></div>
<div class="abs" style="left:628px;top:361px;width:258px;height:5px;border-radius:2.500px 0 0 2.500px;background:linear-gradient(#f58a5c,#ee7342);border:1px solid #d5551f;border-right:none"></div>
<svg class="abs" style="left:880px;top:353px" width="14" height="22" viewBox="0 0 14 22"><defs><linearGradient id="hg1" x1="0" x2="0" y1="0" y2="1"><stop offset="0" stop-color="#fff"/><stop offset="1" stop-color="#dddbd8"/></linearGradient></defs><path d="M1.500 7.200a5.500 5.500 0 0 1 11 0v7.800l-5.500 5.700-5.500-5.700z" fill="url(#hg1)" stroke="#9a968f"/><path d="M5 8.500h4M5 10.500h4M5 12.500h4" stroke="#b0ada7" stroke-width="1"/></svg>
<div class="field" style="left:1156px;top:351px;width:57px;height:24px;background:linear-gradient(90deg,#fff 0,#fff 40px,#b9b6b0 40px,#b9b6b0 41px,#f1f0ee 41px)"></div>
<div class="t" style="left:1163px;top:355px;letter-spacing:-.5px">50</div>
<svg class="abs" style="left:1200px;top:356px" width="10" height="16"><path d="M3.200 3.200h4l-2-2.200z" fill="#6b6964"/><path d="M2 12h6.400l-3.200 3.400z" fill="#55544f"/></svg>
<div class="t" style="left:426px;top:389px;letter-spacing:-.16px">Layermischmodi</div>
<div class="combo" style="left:626px;top:385px;width:191px;padding-left:5px">Normal</div>
<svg class="abs" style="left:803px;top:390px" width="10" height="16"><path d="M1.700 6.800h5.600l-2.800-3z" fill="#5f5e5a"/><path d="M1.500 13h6l-3 3z" fill="#5f5e5a"/></svg>
<div class="t" style="left:824px;top:389px;letter-spacing:.06px">Objektmischmodi</div>
<div class="combo" style="left:1023px;top:385px;width:190px;padding-left:5px">Normal</div>
<svg class="abs" style="left:1199px;top:390px" width="10" height="16"><path d="M1.700 6.800h5.600l-2.800-3z" fill="#5f5e5a"/><path d="M1.500 13h6l-3 3z" fill="#5f5e5a"/></svg>
<!-- renderer combo -->
<div class="combo" style="left:410px;top:429px;width:151px;height:25px;line-height:24px;padding-left:24px">Einzelsymbol</div>
<svg class="abs" style="left:418px;top:434px" width="14" height="16" viewBox="0 0 14 16"><path d="M3.500 3.500v9h2M3.500 7.500h2" fill="none" stroke="#1d8a3a" stroke-width="1"/><rect x="1" y=".5" width="5" height="3" fill="#22b04a" stroke="#178a36" stroke-width=".6"/><rect x="5" y="5.800" width="6.500" height="3.400" fill="#22b04a" stroke="#178a36" stroke-width=".6"/><rect x="5" y="11" width="6.500" height="3.300" fill="#22b04a" stroke="#178a36" stroke-width=".6"/></svg>
<svg class="abs" style="left:546px;top:434px" width="10" height="16"><path d="M1.700 6.800h5.600l-2.800-3z" fill="#5f5e5a"/><path d="M1.500 13h6l-3 3z" fill="#5f5e5a"/></svg>
<!-- symbol preview -->
<div class="abs" style="left:409px;top:461px;width:256px;height:100px;border:1px solid #c9c6c1;background:#f2f1f0"></div>
<div class="abs" style="left:487px;top:511px;width:100px;height:1px;background:#7a4c12"></div>
<svg class="abs" style="left:404px;top:510px" width="4" height="8"><path d="M0 1.500h4M0 3.500h4M0 5.500h4" stroke="#c9c6c1"/></svg>
<div class="t" style="left:409px;top:567px">Symbollayer</div>
<div class="abs" style="left:409px;top:590px;width:256px;height:49px;border:1px solid #c9c6c1;border-bottom:none;background:#fff;overflow:hidden">
 <div class="abs" style="left:0;top:0;width:256px;height:33px;background:linear-gradient(#ebeae8,#d8d7d4)"></div>
 <svg class="abs" style="left:8px;top:11px" width="10" height="8"><path d="M1.300 1.200h6.800l-3.400 5.400z" fill="#6b6b6b" stroke="#444" stroke-width=".5"/></svg>
 <div class="abs" style="left:23px;top:17px;width:16px;height:1px;background:#8a4a12"></div>
 <div class="t b" style="left:45px;top:8px;color:#1a1a1a;letter-spacing:-.4px">Line</div>
 <div class="abs" style="left:44px;top:47px;width:16px;height:6px;background:#f6f1ee"></div>
 <div class="t" style="left:66px;top:40px">Einfache Linie</div>
</div>
<!-- right frame -->
<div class="abs" style="left:671px;top:461px;width:554px;height:178px;border:1px solid #c9c6c1;border-bottom:none"></div>
<div class="t" style="left:681px;top:476px">Einheit</div>
<div class="combo" style="left:788px;top:472px;width:135px;height:25px;line-height:25px;padding-left:4px;letter-spacing:.47px">Millimeter</div>
<svg class="abs" style="left:909px;top:477px" width="10" height="16"><path d="M1.700 6.800h5.600l-2.800-3z" fill="#5f5e5a"/><path d="M1.500 13h6l-3 3z" fill="#5f5e5a"/></svg>
<div class="t" style="left:681px;top:504px;letter-spacing:-.28px">Transparenz 0%</div>
<div class="abs" style="left:795px;top:510px;width:127px;height:5px;border-radius:2.500px;background:#e4e2df;border:1px solid #bfbbb5;border-bottom-color:#fbfbfa"></div>
<svg class="abs" style="left:789px;top:502px" width="14" height="22" viewBox="0 0 14 22"><defs><linearGradient id="hg2" x1="0" x2="0" y1="0" y2="1"><stop offset="0" stop-color="#fff"/><stop offset="1" stop-color="#dddbd8"/></linearGradient></defs><path d="M1.500 7.200a5.500 5.500 0 0 1 11 0v7.800l-5.500 5.700-5.500-5.700z" fill="url(#hg2)" stroke="#9a968f"/><path d="M5 8.500h4M5 10.500h4M5 12.500h4" stroke="#b0ada7" stroke-width="1"/></svg>
<div class="t" style="left:933px;top:502px">Breite</div>
<div class="field" style="left:1073px;top:498px;width:131px;height:25px;background:linear-gradient(90deg,#fff 0,#fff 114px,#b9b6b0 114px,#b9b6b0 115px,#f1f0ee 115px)"></div>
<div class="t" style="left:1079px;top:502px;letter-spacing:-.27px">1,00000</div>
<svg class="abs" style="left:1191px;top:503px" width="10" height="16"><path d="M3.200 3.200h4l-2-2.200z" fill="#6b6964"/><path d="M2 12h6.400l-3.200 3.400z" fill="#55544f"/></svg>
<div class="t" style="left:681px;top:530px;letter-spacing:-.58px">Farbe</div>
<div class="btn" style="left:787px;top:527px;width:100px;height:23px"></div>
<div class="abs" style="left:791px;top:530px;width:92px;height:17px;border-radius:2px;background:#6f430f;border:1px solid #4a2c08"></div>
<div class="t" style="left:681px;top:559px;letter-spacing:-.14px">Gespeicherte Stile</div>
<div class="field" style="left:1012px;top:555px;width:201px;height:25px;background:linear-gradient(90deg,#fff 0,#fff 175px,#b9b6b0 175px,#b9b6b0 176px,#f4f3f1 176px)"></div>
<svg class="abs" style="left:1195px;top:565px" width="12" height="8"><path d="M3 2h7l-3.500 5z" fill="#5f5e5a"/></svg>
<!-- style list -->
<div class="abs" style="left:681px;top:585px;width:517px;height:54px;border:1px solid #c9c6c1;border-bottom:none;background:#fff"></div>
<svg class="abs" style="left:681px;top:600px" width="520" height="32" viewBox="0 0 520 32">
 <rect x="8.500" y="13.300" width="48.500" height="6.400" fill="#78ec0c"/><path d="M6 16.500h51" stroke="#4da30f" stroke-width="4" stroke-dasharray="6.500 8.500" stroke-linecap="round"/><rect x="4" y="12" width="4.500" height="9" fill="#fff"/><rect x="57" y="12" width="5" height="9" fill="#fff"/>
 <rect x="67.500" y="13.500" width="48.500" height="6" fill="#bfdcf7"/>
 <rect x="126.500" y="13.500" width="48.500" height="6" fill="#bfdcf7"/>
 <rect x="186" y="13" width="2.700" height="7" fill="#f00" stroke="#4a0000" stroke-width=".7"/><rect x="190.60" y="13" width="6.200" height="7" fill="#f00" stroke="#4a0000" stroke-width=".8"/><rect x="198.05" y="13" width="6.200" height="7" fill="#f00" stroke="#4a0000" stroke-width=".8"/><rect x="205.50" y="13" width="6.200" height="7" fill="#f00" stroke="#4a0000" stroke-width=".8"/><rect x="212.95" y="13" width="6.200" height="7" fill="#f00" stroke="#4a0000" stroke-width=".8"/><rect x="220.40" y="13" width="6.200" height="7" fill="#f00" stroke="#4a0000" stroke-width=".8"/><rect x="227.85" y="13" width="6.200" height="7" fill="#f00" stroke="#4a0000" stroke-width=".8"/>
 <path d="M245 11.500h4q1.200 0 1.200 1.200v8.600q0 1.200-1.200 1.200h-4" fill="none" stroke="#222" stroke-width="1.200"/><rect x="245" y="14.800" width="2.200" height="3.600" fill="#1e7fe0" stroke="#0a2a55" stroke-width=".6"/>
 <rect x="261.500" y="10.500" width="12" height="12" rx="1.500" fill="#fff" stroke="#222" stroke-width="1.200"/><rect x="265.500" y="14.500" width="4" height="4" rx=".8" fill="#1e7fe0" stroke="#0a2a55" stroke-width=".7"/>
 <path d="M293 10.500h-7q-1.500 0-1.500 1.500v9q0 1.500 1.500 1.500h7" fill="none" stroke="#222" stroke-width="1.200"/><rect x="288.500" y="14.500" width="4" height="4" rx=".8" fill="#1e7fe0" stroke="#0a2a55" stroke-width=".7"/>
 <rect x="304.500" y="15" width="48" height="3" fill="#b5749c"/><path d="M306.500 16.500h45" stroke="#fff" stroke-width="1.200" stroke-dasharray="3.200 2.600"/>
 <rect x="363" y="11" width="48" height="11" fill="#a9d0ea"/>
 <rect x="422" y="13.500" width="48" height="5.500" fill="#cfe6fa"/><path d="M422 13.700h48M422 18.800h48" stroke="#9a5a1e" stroke-width="1"/>
</svg>
<!-- inner scrollbar -->
<div class="abs" style="left:1201px;top:586px;width:12px;height:53px;border:1px solid #c2bfb9;border-bottom:none;border-radius:6px 6px 0 0;background:linear-gradient(90deg,#d5d3cf,#e4e2df)"></div>
<div class="abs" style="left:1201px;top:598px;width:12px;height:34px;border:1px solid #aaa6a0;border-radius:6px;background:linear-gradient(90deg,#fdfdfd,#e9e7e4)"></div>
<svg class="abs" style="left:1201px;top:588px" width="12" height="40"><path d="M4 6h4l-2-3z" fill="#a5a29c"/><path d="M4 23.500h4M4 25.500h4M4 27.500h4" stroke="#a5a29c"/></svg>
<!-- outer scrollbar -->
<div class="abs" style="left:1227px;top:324px;width:13px;height:314px;border:1px solid #c2bfb9;border-radius:6.500px;background:linear-gradient(90deg,#d3d1cd,#e4e2df)"></div>
<div class="abs" style="left:1227px;top:337px;width:13px;height:238px;border:1px solid #aaa6a0;border-radius:6.500px;background:linear-gradient(90deg,#fdfdfd,#e9e7e4)"></div>
<svg class="abs" style="left:1227px;top:324px" width="13" height="314"><path d="M4.500 9h4l-2-3z" fill="#a5a29c"/><path d="M3.500 305h6l-3 4.500z" fill="#5a5955"/></svg>
<svg class="abs" style="left:1229px;top:449px" width="8" height="10"><path d="M1 1.500h6M1 3.500h6M1 5.500h6M1 7.500h6" stroke="#b5b2ac" stroke-width=".9"/></svg>
<!-- buttons -->
<div class="btn" style="left:410px;top:646px;width:196px;height:25px;line-height:23px">Stil laden...</div>
<div class="btn" style="left:614px;top:646px;width:196px;height:25px;line-height:23px;letter-spacing:-.2px">Als Vorgabe speichern</div>
<div class="btn" style="left:818px;top:646px;width:217px;height:25px;line-height:23px;letter-spacing:.11px">Stilvorgaben wiederherstellen</div>
<div class="btn" style="left:1043px;top:646px;width:196px;height:25px;line-height:23px;padding-right:22px">Stil speichern</div>
<svg class="abs" style="left:1223px;top:655px" width="12" height="8"><path d="M2.200 2.300h7l-3.500 4.700z" fill="#5f5e5a"/></svg>
<div class="btn" style="left:410px;top:679px;width:83px;height:25px;line-height:23px">Hilfe</div>
<div class="btn" style="left:961px;top:679px;width:89px;height:25px;line-height:23px">Anwenden</div>
<div class="btn" style="left:1058px;top:679px;width:90px;height:25px;line-height:23px"><span style="text-decoration:underline;text-underline-offset:3px">A</span>bbrechen</div>
<div class="btn" style="left:1156px;top:679px;width:83px;height:25px;line-height:23px;background:linear-gradient(#f9a680,#f08355);border-color:#c96a43"><span style="text-decoration:underline;text-underline-offset:3px">O</span>K</div>
<!-- right window border -->
<div class="abs" style="left:1303px;top:28px;width:1px;height:716px;background:#4a4845"></div>
</div>
</body>
</html>
